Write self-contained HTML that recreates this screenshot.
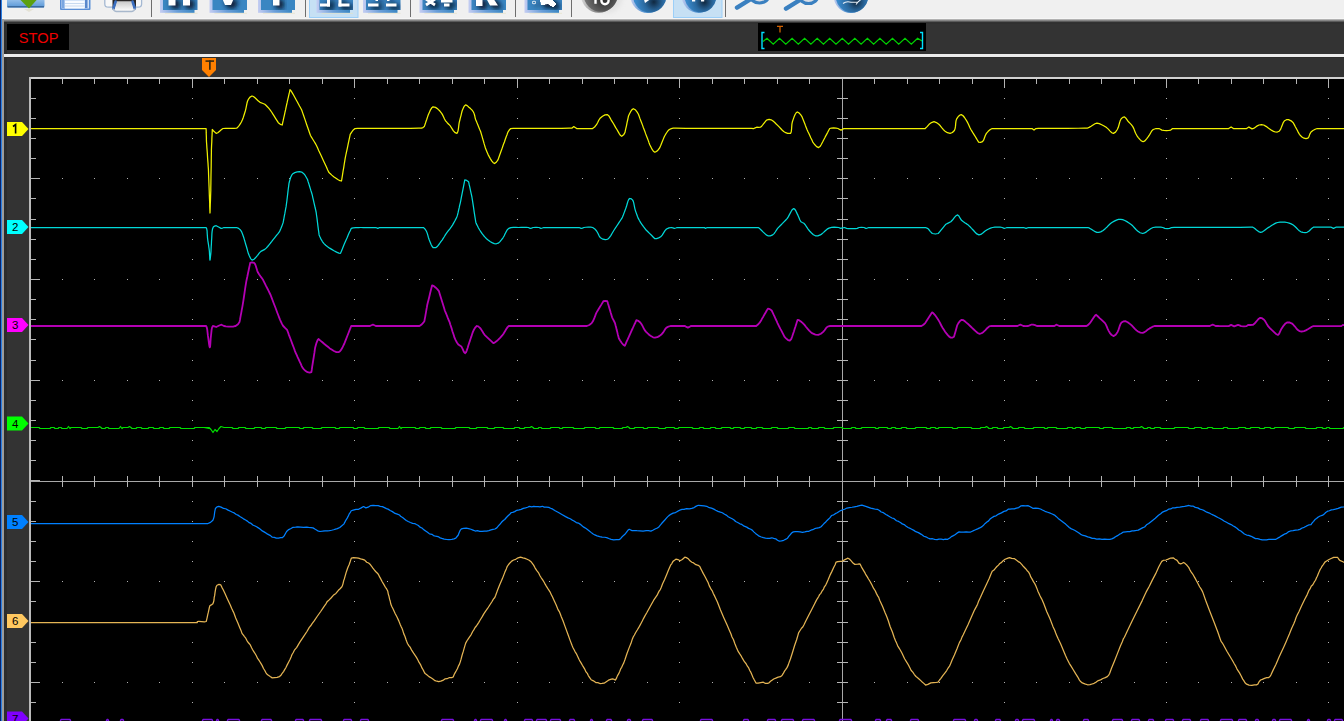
<!DOCTYPE html>
<html><head><meta charset="utf-8"><style>
html,body{margin:0;padding:0;width:1344px;height:721px;overflow:hidden;background:#333;}
svg{position:absolute;left:0;top:0;display:block;}
</style></head><body>
<svg width="1344" height="721" viewBox="0 0 1344 721" shape-rendering="crispEdges">
<defs>
<linearGradient id="tbsh" x1="0" y1="0" x2="0" y2="1">
<stop offset="0" stop-color="#c8c8c8"/><stop offset="0.5" stop-color="#7a7a7a"/><stop offset="1" stop-color="#323232"/>
</linearGradient>
</defs>
<rect x="0" y="0" width="1344" height="721" fill="#333"/>
<!-- toolbar -->
<rect x="0" y="0" width="1344" height="19" fill="#f0f0f0"/>
<rect x="0" y="18" width="1344" height="1" fill="#f6f6f6"/>
<rect x="0" y="19" width="1344" height="3.5" fill="url(#tbsh)"/>
<g shape-rendering="auto"><defs>
<linearGradient id="cside" x1="0" y1="0" x2="1" y2="0"><stop offset="0" stop-color="#c0ccf0"/><stop offset="0.35" stop-color="#5a96d4"/><stop offset="1" stop-color="#3a86c2"/></linearGradient>
<radialGradient id="cfront" cx="0.62" cy="0.68" r="0.55"><stop offset="0" stop-color="#102840"/><stop offset="0.5" stop-color="#2a689e"/><stop offset="1" stop-color="#3a8acc"/></radialGradient>
<linearGradient id="gside" x1="0" y1="0" x2="1" y2="0"><stop offset="0" stop-color="#d8d8d8"/><stop offset="0.4" stop-color="#8a8a8a"/><stop offset="1" stop-color="#6a6a6a"/></linearGradient>
<radialGradient id="gfront" cx="0.6" cy="0.62" r="0.6"><stop offset="0" stop-color="#2c2c2c"/><stop offset="0.55" stop-color="#555"/><stop offset="1" stop-color="#787878"/></radialGradient>
<linearGradient id="side" x1="0" y1="0" x2="1" y2="0"><stop offset="0" stop-color="#c4cdf2"/><stop offset="0.5" stop-color="#6a9ed8"/><stop offset="1" stop-color="#3a86c2"/></linearGradient>
<filter id="bl" x="-50%" y="-50%" width="200%" height="200%"><feGaussianBlur stdDeviation="2.4"/></filter>
<linearGradient id="edge" x1="0" y1="0" x2="1" y2="0"><stop offset="0" stop-color="#c8d4f4"/><stop offset="1" stop-color="#c8d4f4" stop-opacity="0"/></linearGradient>
<linearGradient id="g1" x1="0" y1="0" x2="0" y2="1"><stop offset="0" stop-color="#a8ccf0"/><stop offset="1" stop-color="#5896d6"/></linearGradient>
<radialGradient id="gb" cx="0.55" cy="0.25" r="0.7"><stop offset="0" stop-color="#0e2a48"/><stop offset="0.45" stop-color="#2a6aa4"/><stop offset="1" stop-color="#3a88c6"/></radialGradient>
<radialGradient id="gc" cx="0.55" cy="0.3" r="0.65"><stop offset="0" stop-color="#0c2036"/><stop offset="0.55" stop-color="#2b6ca6"/><stop offset="1" stop-color="#3a8ccc"/></radialGradient>
<radialGradient id="gg" cx="0.55" cy="0.3" r="0.65"><stop offset="0" stop-color="#2a2a2a"/><stop offset="0.6" stop-color="#5a5a5a"/><stop offset="1" stop-color="#7a7a7a"/></radialGradient>
</defs>
<!-- icon 1: blue box with green arrow -->
<rect x="7" y="-3" width="37.5" height="10.5" rx="1.5" fill="url(#g1)"/>
<rect x="7.5" y="6" width="36.5" height="1.5" fill="#3a6aa0"/>
<polygon points="19.5,-1 37.5,-1 29,8.5" fill="#5ca010"/>
<polygon points="24,9 34,9 29,12" fill="#e4e2d4"/>
<!-- floppy -->
<rect x="60" y="-2" width="30.5" height="12" rx="1" fill="#5b8fd6"/>
<rect x="61.5" y="-2" width="27.5" height="10.5" fill="#d4e4f8"/>
<rect x="65" y="1" width="19.5" height="7.5" fill="#f8fbff"/>
<rect x="65" y="3" width="19.5" height="1" fill="#c8daf0"/>
<rect x="65" y="5.5" width="19.5" height="1" fill="#c8daf0"/>
<rect x="62" y="-2" width="2.5" height="10" fill="#7aa6e0"/>
<rect x="85" y="-2" width="2.5" height="10" fill="#5a88cc"/>
<!-- printer -->
<g shape-rendering="geometricPrecision">
<linearGradient id="paper" x1="0" y1="0" x2="0" y2="1"><stop offset="0" stop-color="#c8c8c8"/><stop offset="1" stop-color="#fafafa"/></linearGradient>
<path d="M104.8,-2 L104.8,4 Q104.8,7.2 108.5,7.2 L138,7.2 Q141.6,7.2 141.6,4 L141.6,-2" fill="#f8f8f8" stroke="#a4b8d2" stroke-width="1.3"/>
<polygon points="112.5,-2 136,-2 136,6 135,9.5 113,9.5 112.5,6" fill="#2a2828"/>
<polygon points="116.5,1.2 131.8,1.2 134.5,10.3 114,10.3" fill="url(#paper)"/>
<line x1="115.6" y1="1.5" x2="113.4" y2="8.6" stroke="#3a6ec0" stroke-width="2.6" stroke-linecap="round"/>
<line x1="132.6" y1="1.5" x2="134.8" y2="8.6" stroke="#3a6ec0" stroke-width="2.6" stroke-linecap="round"/>
<path d="M112.8,8.5 Q114,11.5 116.5,11.5 L131.5,11.5 Q134,11.5 135.3,8.5" fill="none" stroke="#a8b8cc" stroke-width="1.3"/>
</g>
<!-- separators -->
<rect x="151" y="0" width="1" height="17" fill="#6e6e6e"/>
<rect x="305" y="0" width="1" height="17" fill="#6e6e6e"/>
<rect x="410" y="0" width="1" height="17" fill="#6e6e6e"/>
<rect x="515" y="0" width="1" height="17" fill="#6e6e6e"/>
<rect x="571" y="0" width="1" height="17" fill="#6e6e6e"/>
<rect x="725" y="0" width="1" height="17" fill="#6e6e6e"/>
<!-- selected backgrounds -->
<rect x="309.5" y="-1" width="48.5" height="18.5" fill="#c6e0f4" stroke="#9ccff8" stroke-width="1"/>
<rect x="673.5" y="-1" width="48.5" height="18.5" fill="#c6e0f4" stroke="#9ccff8" stroke-width="1"/>
<!-- blue square icons -->
<clipPath id="cp1"><rect x="163" y="-3" width="34.5" height="13"/></clipPath><rect x="165" y="12.8" width="32.5" height="1" fill="#e6e2c6" opacity="0.7"/><rect x="160" y="0" width="34.5" height="12.8" fill="url(#side)"/><rect x="163" y="-3" width="34.5" height="13" fill="#3a86c2"/><g clip-path="url(#cp1)"><g filter="url(#bl)" transform="translate(4,3)" fill="#0a1c34" stroke="#0a1c34"><rect x="168.5" y="-2" width="7" height="7.5" stroke="none"/><rect x="183" y="-2" width="7" height="7.5" stroke="none"/></g><g filter="url(#bl)" transform="translate(2,1.5)" fill="#0a1c34" stroke="#0a1c34" opacity="0.8"><rect x="168.5" y="-2" width="7" height="7.5" stroke="none"/><rect x="183" y="-2" width="7" height="7.5" stroke="none"/></g></g><g fill="#fff" stroke="#fff"><rect x="168.5" y="-2" width="7" height="7.5" stroke="none"/><rect x="183" y="-2" width="7" height="7.5" stroke="none"/></g>
<clipPath id="cp2"><rect x="212.5" y="-3" width="34.5" height="13"/></clipPath><rect x="214.5" y="12.8" width="32.5" height="1" fill="#e6e2c6" opacity="0.7"/><rect x="209.5" y="0" width="34.5" height="12.8" fill="url(#side)"/><rect x="212.5" y="-3" width="34.5" height="13" fill="#3a86c2"/><g clip-path="url(#cp2)"><g filter="url(#bl)" transform="translate(4,3)" fill="#0a1c34" stroke="#0a1c34"><polygon points="222,-2 234,-2 231,5 225,5" stroke="none"/></g><g filter="url(#bl)" transform="translate(2,1.5)" fill="#0a1c34" stroke="#0a1c34" opacity="0.8"><polygon points="222,-2 234,-2 231,5 225,5" stroke="none"/></g></g><g fill="#fff" stroke="#fff"><polygon points="222,-2 234,-2 231,5 225,5" stroke="none"/></g>
<clipPath id="cp3"><rect x="261" y="-3" width="34" height="13"/></clipPath><rect x="263" y="12.8" width="32" height="1" fill="#e6e2c6" opacity="0.7"/><rect x="258" y="0" width="34" height="12.8" fill="url(#side)"/><rect x="261" y="-3" width="34" height="13" fill="#3a86c2"/><g clip-path="url(#cp3)"><g filter="url(#bl)" transform="translate(4,3)" fill="#0a1c34" stroke="#0a1c34"><rect x="273" y="-2" width="6.5" height="7.5" stroke="none"/></g><g filter="url(#bl)" transform="translate(2,1.5)" fill="#0a1c34" stroke="#0a1c34" opacity="0.8"><rect x="273" y="-2" width="6.5" height="7.5" stroke="none"/></g></g><g fill="#fff" stroke="#fff"><rect x="273" y="-2" width="6.5" height="7.5" stroke="none"/></g>
<clipPath id="cp4"><rect x="319.5" y="-3" width="33.5" height="13"/></clipPath><rect x="321.5" y="12.8" width="31.5" height="1" fill="#e6e2c6" opacity="0.7"/><rect x="316.5" y="0" width="33.5" height="12.8" fill="url(#side)"/><rect x="319.5" y="-3" width="33.5" height="13" fill="#3a86c2"/><g clip-path="url(#cp4)"><g filter="url(#bl)" transform="translate(4,3)" fill="#0a1c34" stroke="#0a1c34"><rect x="320" y="3.5" width="10" height="3" stroke="none"/><rect x="327" y="-2" width="3" height="8.5" stroke="none"/><rect x="338.5" y="3.5" width="11" height="3" stroke="none"/><rect x="338.5" y="-2" width="3" height="8.5" stroke="none"/></g><g filter="url(#bl)" transform="translate(2,1.5)" fill="#0a1c34" stroke="#0a1c34" opacity="0.8"><rect x="320" y="3.5" width="10" height="3" stroke="none"/><rect x="327" y="-2" width="3" height="8.5" stroke="none"/><rect x="338.5" y="3.5" width="11" height="3" stroke="none"/><rect x="338.5" y="-2" width="3" height="8.5" stroke="none"/></g></g><g fill="#fff" stroke="#fff"><rect x="320" y="3.5" width="10" height="3" stroke="none"/><rect x="327" y="-2" width="3" height="8.5" stroke="none"/><rect x="338.5" y="3.5" width="11" height="3" stroke="none"/><rect x="338.5" y="-2" width="3" height="8.5" stroke="none"/></g>
<clipPath id="cp5"><rect x="366" y="-3" width="34.5" height="13"/></clipPath><rect x="368" y="12.8" width="32.5" height="1" fill="#e6e2c6" opacity="0.7"/><rect x="363" y="0" width="34.5" height="12.8" fill="url(#side)"/><rect x="366" y="-3" width="34.5" height="13" fill="#3a86c2"/><g clip-path="url(#cp5)"><g filter="url(#bl)" transform="translate(4,3)" fill="#0a1c34" stroke="#0a1c34"><rect x="368" y="3.5" width="10.5" height="3" stroke="none"/><rect x="386" y="3.5" width="10.5" height="3" stroke="none"/><rect x="375.5" y="-2" width="2.5" height="3" stroke="none"/><rect x="387" y="-2" width="2.5" height="3" stroke="none"/></g><g filter="url(#bl)" transform="translate(2,1.5)" fill="#0a1c34" stroke="#0a1c34" opacity="0.8"><rect x="368" y="3.5" width="10.5" height="3" stroke="none"/><rect x="386" y="3.5" width="10.5" height="3" stroke="none"/><rect x="375.5" y="-2" width="2.5" height="3" stroke="none"/><rect x="387" y="-2" width="2.5" height="3" stroke="none"/></g></g><g fill="#fff" stroke="#fff"><rect x="368" y="3.5" width="10.5" height="3" stroke="none"/><rect x="386" y="3.5" width="10.5" height="3" stroke="none"/><rect x="375.5" y="-2" width="2.5" height="3" stroke="none"/><rect x="387" y="-2" width="2.5" height="3" stroke="none"/></g>
<clipPath id="cp6"><rect x="422.5" y="-3" width="34.5" height="13"/></clipPath><rect x="424.5" y="12.8" width="32.5" height="1" fill="#e6e2c6" opacity="0.7"/><rect x="419.5" y="0" width="34.5" height="12.8" fill="url(#side)"/><rect x="422.5" y="-3" width="34.5" height="13" fill="#3a86c2"/><g clip-path="url(#cp6)"><g filter="url(#bl)" transform="translate(4,3)" fill="#0a1c34" stroke="#0a1c34"><path d="M426,-1 L435,5 M435,-1 L426,5" fill="none" stroke-width="2.8"/><rect x="441" y="0" width="11.5" height="2.5" stroke="none"/><rect x="444" y="3.5" width="5.5" height="3" stroke="none"/></g><g filter="url(#bl)" transform="translate(2,1.5)" fill="#0a1c34" stroke="#0a1c34" opacity="0.8"><path d="M426,-1 L435,5 M435,-1 L426,5" fill="none" stroke-width="2.8"/><rect x="441" y="0" width="11.5" height="2.5" stroke="none"/><rect x="444" y="3.5" width="5.5" height="3" stroke="none"/></g></g><g fill="#fff" stroke="#fff"><path d="M426,-1 L435,5 M435,-1 L426,5" fill="none" stroke-width="2.8"/><rect x="441" y="0" width="11.5" height="2.5" stroke="none"/><rect x="444" y="3.5" width="5.5" height="3" stroke="none"/></g>
<clipPath id="cp7"><rect x="471.5" y="-3" width="34.5" height="13"/></clipPath><rect x="473.5" y="12.8" width="32.5" height="1" fill="#e6e2c6" opacity="0.7"/><rect x="468.5" y="0" width="34.5" height="12.8" fill="url(#side)"/><rect x="471.5" y="-3" width="34.5" height="13" fill="#3a86c2"/><g clip-path="url(#cp7)"><g filter="url(#bl)" transform="translate(4,3)" fill="#0a1c34" stroke="#0a1c34"><rect x="476" y="-2" width="6.5" height="8" stroke="none"/><polygon points="486,-2 493,-2 498,5.5 490,5.5" stroke="none"/></g><g filter="url(#bl)" transform="translate(2,1.5)" fill="#0a1c34" stroke="#0a1c34" opacity="0.8"><rect x="476" y="-2" width="6.5" height="8" stroke="none"/><polygon points="486,-2 493,-2 498,5.5 490,5.5" stroke="none"/></g></g><g fill="#fff" stroke="#fff"><rect x="476" y="-2" width="6.5" height="8" stroke="none"/><polygon points="486,-2 493,-2 498,5.5 490,5.5" stroke="none"/></g>
<clipPath id="cp8"><rect x="527.5" y="-3" width="34.5" height="13"/></clipPath><rect x="529.5" y="12.8" width="32.5" height="1" fill="#e6e2c6" opacity="0.7"/><rect x="524.5" y="0" width="34.5" height="12.8" fill="url(#side)"/><rect x="527.5" y="-3" width="34.5" height="13" fill="#3a86c2"/><g clip-path="url(#cp8)"><g filter="url(#bl)" transform="translate(4,3)" fill="#0a1c34" stroke="#0a1c34"><polygon points="540,-2 550,-2 556,4 553,7 548,4 541,5" stroke="none"/><circle cx="534" cy="2.5" r="1.5" fill="none" stroke-width="0.8" opacity="0.6"/></g><g filter="url(#bl)" transform="translate(2,1.5)" fill="#0a1c34" stroke="#0a1c34" opacity="0.8"><polygon points="540,-2 550,-2 556,4 553,7 548,4 541,5" stroke="none"/><circle cx="534" cy="2.5" r="1.5" fill="none" stroke-width="0.8" opacity="0.6"/></g></g><g fill="#fff" stroke="#fff"><polygon points="540,-2 550,-2 556,4 553,7 548,4 541,5" stroke="none"/><circle cx="534" cy="2.5" r="1.5" fill="none" stroke-width="0.8" opacity="0.6"/></g>
/></g><g fill="#fff" stroke="#fff"><polygon points="540,-2 550,-2 556,4 553,7 548,4 541,5" stroke="none"/><circle cx="534" cy="2.5" r="1.5" fill="none" stroke-width="0.8" opacity="0.6"/></g>
<!-- circle buttons -->
<g shape-rendering="geometricPrecision">
<ellipse cx="606" cy="-2" rx="16" ry="15" fill="#c8c8c8" opacity="0.35" filter="url(#bl)"/>
<circle cx="598.8" cy="-5" r="17.8" fill="url(#gside)"/>
<circle cx="600.8" cy="-5.2" r="17" fill="url(#gfront)"/>
<path d="M595.5,-2 L595.5,3.8" stroke="#fff" stroke-width="2.4"/>
<ellipse cx="605" cy="0.8" rx="3.6" ry="3.4" fill="none" stroke="#fff" stroke-width="2.4"/>
<circle cx="647.8" cy="-4.2" r="17.3" fill="url(#cside)"/>
<circle cx="649.8" cy="-4" r="16.6" fill="url(#cfront)"/>
<polygon points="643.5,-2 652,-2 645,3" fill="#fff"/>
<circle cx="698.8" cy="-4.2" r="17.1" fill="url(#cside)"/>
<circle cx="700.5" cy="-3.6" r="15.9" fill="url(#cfront)"/>
<rect x="692" y="-2" width="3.2" height="3.5" fill="#fff"/><rect x="701" y="-2" width="3.2" height="3.5" fill="#fff"/>
<circle cx="850.9" cy="-4.2" r="17.2" fill="url(#cside)"/>
<circle cx="852" cy="-3.6" r="16.2" fill="url(#cfront)"/>
<path d="M843,3.5 Q846,1 851,2.2 L858,2 L862,-1.5 M856,4.5 L858,2" stroke="#e8f0f8" stroke-width="1.1" fill="none"/>
</g>
<!-- magnifiers --><g shape-rendering="geometricPrecision">
<ellipse cx="759.5" cy="-5" rx="9.5" ry="8" fill="#dadee6" stroke="#3a80c0" stroke-width="3.2"/>
<line x1="737" y1="7.6" x2="751" y2="-1" stroke="#3a80c0" stroke-width="4.4" stroke-linecap="round"/>
<ellipse cx="808.5" cy="-4.5" rx="9.5" ry="8" fill="#dadee6" stroke="#3a80c0" stroke-width="3.2"/>
<line x1="786" y1="8.6" x2="800" y2="0" stroke="#3a80c0" stroke-width="4.4" stroke-linecap="round"/>
</g>
</g>
<!-- status bar -->
<rect x="4" y="22.5" width="1344" height="1.5" fill="#303030"/>
<rect x="4" y="22" width="3" height="721" fill="#2c2c2c"/>
<rect x="7" y="24" width="62" height="26" fill="#000"/>
<text x="38.6" y="43.2" font-size="15.5" fill="#ee0000" text-anchor="middle" font-family="Liberation Sans, sans-serif" textLength="39.6" lengthAdjust="spacingAndGlyphs" shape-rendering="auto">STOP</text>
<rect x="758" y="23" width="168" height="28" fill="#000"/>
<g shape-rendering="auto"><polyline points="763.0,41.5 767.0,38.3 773.2,44.2 779.5,38.3 785.8,44.2 792.1,38.3 798.3,44.2 804.6,38.3 810.9,44.2 817.2,38.3 823.4,44.2 829.7,38.3 836.0,44.2 842.3,38.3 848.5,44.2 854.8,38.3 861.1,44.2 867.4,38.3 873.6,44.2 879.9,38.3 886.2,44.2 892.5,38.3 898.7,44.2 905.0,38.3 911.3,44.2 917.6,38.3 922.0,41.0" fill="none" stroke="#00d000" stroke-width="1.2"/>
<path d="M764.5,32.5 L762,32.5 L762,48.5 L764.5,48.5 M920,32.5 L922.5,32.5 L922.5,48.5 L920,48.5" fill="none" stroke="#00e0ff" stroke-width="1.4"/>
<path d="M777,26.3 L783,26.3 M780,26.3 L780,32.5" fill="none" stroke="#d06000" stroke-width="1.3"/></g>
<rect x="4" y="54" width="1344" height="3" fill="#ececec"/>
<rect x="4" y="57" width="1344" height="1" fill="#2c2c2c"/>
<!-- graticule -->
<rect x="31" y="79" width="1313" height="642" fill="#000"/><rect x="29" y="77" width="1315" height="2" fill="#d2d2d2"/><rect x="29" y="77" width="2" height="644" fill="#bababa"/><rect x="62" y="79" width="1" height="5" fill="#b4b4b4"/><rect x="94" y="79" width="1" height="5" fill="#b4b4b4"/><rect x="127" y="79" width="1" height="5" fill="#b4b4b4"/><rect x="159" y="79" width="1" height="5" fill="#b4b4b4"/><rect x="192" y="79" width="1" height="9" fill="#b4b4b4"/><rect x="224" y="79" width="1" height="5" fill="#b4b4b4"/><rect x="257" y="79" width="1" height="5" fill="#b4b4b4"/><rect x="289" y="79" width="1" height="5" fill="#b4b4b4"/><rect x="322" y="79" width="1" height="5" fill="#b4b4b4"/><rect x="354" y="79" width="1" height="9" fill="#b4b4b4"/><rect x="387" y="79" width="1" height="5" fill="#b4b4b4"/><rect x="419" y="79" width="1" height="5" fill="#b4b4b4"/><rect x="452" y="79" width="1" height="5" fill="#b4b4b4"/><rect x="484" y="79" width="1" height="5" fill="#b4b4b4"/><rect x="517" y="79" width="1" height="9" fill="#b4b4b4"/><rect x="549" y="79" width="1" height="5" fill="#b4b4b4"/><rect x="582" y="79" width="1" height="5" fill="#b4b4b4"/><rect x="614" y="79" width="1" height="5" fill="#b4b4b4"/><rect x="647" y="79" width="1" height="5" fill="#b4b4b4"/><rect x="679" y="79" width="1" height="9" fill="#b4b4b4"/><rect x="712" y="79" width="1" height="5" fill="#b4b4b4"/><rect x="744" y="79" width="1" height="5" fill="#b4b4b4"/><rect x="777" y="79" width="1" height="5" fill="#b4b4b4"/><rect x="809" y="79" width="1" height="5" fill="#b4b4b4"/><rect x="842" y="79" width="1" height="9" fill="#b4b4b4"/><rect x="874" y="79" width="1" height="5" fill="#b4b4b4"/><rect x="907" y="79" width="1" height="5" fill="#b4b4b4"/><rect x="939" y="79" width="1" height="5" fill="#b4b4b4"/><rect x="972" y="79" width="1" height="5" fill="#b4b4b4"/><rect x="1004" y="79" width="1" height="9" fill="#b4b4b4"/><rect x="1036" y="79" width="1" height="5" fill="#b4b4b4"/><rect x="1069" y="79" width="1" height="5" fill="#b4b4b4"/><rect x="1101" y="79" width="1" height="5" fill="#b4b4b4"/><rect x="1134" y="79" width="1" height="5" fill="#b4b4b4"/><rect x="1166" y="79" width="1" height="9" fill="#b4b4b4"/><rect x="1198" y="79" width="1" height="5" fill="#b4b4b4"/><rect x="1231" y="79" width="1" height="5" fill="#b4b4b4"/><rect x="1263" y="79" width="1" height="5" fill="#b4b4b4"/><rect x="1296" y="79" width="1" height="5" fill="#b4b4b4"/><rect x="1328" y="79" width="1" height="9" fill="#b4b4b4"/><rect x="31" y="98" width="5" height="1" fill="#b4b4b4"/><rect x="31" y="118" width="5" height="1" fill="#b4b4b4"/><rect x="31" y="138" width="5" height="1" fill="#b4b4b4"/><rect x="31" y="158" width="5" height="1" fill="#b4b4b4"/><rect x="31" y="178" width="9" height="1" fill="#b4b4b4"/><rect x="31" y="198" width="5" height="1" fill="#b4b4b4"/><rect x="31" y="219" width="5" height="1" fill="#b4b4b4"/><rect x="31" y="239" width="5" height="1" fill="#b4b4b4"/><rect x="31" y="259" width="5" height="1" fill="#b4b4b4"/><rect x="31" y="279" width="9" height="1" fill="#b4b4b4"/><rect x="31" y="299" width="5" height="1" fill="#b4b4b4"/><rect x="31" y="319" width="5" height="1" fill="#b4b4b4"/><rect x="31" y="339" width="5" height="1" fill="#b4b4b4"/><rect x="31" y="360" width="5" height="1" fill="#b4b4b4"/><rect x="31" y="380" width="9" height="1" fill="#b4b4b4"/><rect x="31" y="400" width="5" height="1" fill="#b4b4b4"/><rect x="31" y="420" width="5" height="1" fill="#b4b4b4"/><rect x="31" y="440" width="5" height="1" fill="#b4b4b4"/><rect x="31" y="460" width="5" height="1" fill="#b4b4b4"/><rect x="31" y="480" width="9" height="1" fill="#b4b4b4"/><rect x="31" y="501" width="5" height="1" fill="#b4b4b4"/><rect x="31" y="521" width="5" height="1" fill="#b4b4b4"/><rect x="31" y="541" width="5" height="1" fill="#b4b4b4"/><rect x="31" y="561" width="5" height="1" fill="#b4b4b4"/><rect x="31" y="581" width="9" height="1" fill="#b4b4b4"/><rect x="31" y="601" width="5" height="1" fill="#b4b4b4"/><rect x="31" y="622" width="5" height="1" fill="#b4b4b4"/><rect x="31" y="642" width="5" height="1" fill="#b4b4b4"/><rect x="31" y="662" width="5" height="1" fill="#b4b4b4"/><rect x="31" y="682" width="9" height="1" fill="#b4b4b4"/><rect x="31" y="702" width="5" height="1" fill="#b4b4b4"/><rect x="842" y="79" width="1" height="642" fill="#a8a8a8"/><rect x="31" y="481" width="1313" height="1" fill="#a8a8a8"/><rect x="62" y="476" width="1" height="11" fill="#b4b4b4"/><rect x="94" y="476" width="1" height="11" fill="#b4b4b4"/><rect x="127" y="476" width="1" height="11" fill="#b4b4b4"/><rect x="159" y="476" width="1" height="11" fill="#b4b4b4"/><rect x="192" y="476" width="1" height="11" fill="#b4b4b4"/><rect x="224" y="476" width="1" height="11" fill="#b4b4b4"/><rect x="257" y="476" width="1" height="11" fill="#b4b4b4"/><rect x="289" y="476" width="1" height="11" fill="#b4b4b4"/><rect x="322" y="476" width="1" height="11" fill="#b4b4b4"/><rect x="354" y="476" width="1" height="11" fill="#b4b4b4"/><rect x="387" y="476" width="1" height="11" fill="#b4b4b4"/><rect x="419" y="476" width="1" height="11" fill="#b4b4b4"/><rect x="452" y="476" width="1" height="11" fill="#b4b4b4"/><rect x="484" y="476" width="1" height="11" fill="#b4b4b4"/><rect x="517" y="476" width="1" height="11" fill="#b4b4b4"/><rect x="549" y="476" width="1" height="11" fill="#b4b4b4"/><rect x="582" y="476" width="1" height="11" fill="#b4b4b4"/><rect x="614" y="476" width="1" height="11" fill="#b4b4b4"/><rect x="647" y="476" width="1" height="11" fill="#b4b4b4"/><rect x="679" y="476" width="1" height="11" fill="#b4b4b4"/><rect x="712" y="476" width="1" height="11" fill="#b4b4b4"/><rect x="744" y="476" width="1" height="11" fill="#b4b4b4"/><rect x="777" y="476" width="1" height="11" fill="#b4b4b4"/><rect x="809" y="476" width="1" height="11" fill="#b4b4b4"/><rect x="874" y="476" width="1" height="11" fill="#b4b4b4"/><rect x="907" y="476" width="1" height="11" fill="#b4b4b4"/><rect x="939" y="476" width="1" height="11" fill="#b4b4b4"/><rect x="972" y="476" width="1" height="11" fill="#b4b4b4"/><rect x="1004" y="476" width="1" height="11" fill="#b4b4b4"/><rect x="1036" y="476" width="1" height="11" fill="#b4b4b4"/><rect x="1069" y="476" width="1" height="11" fill="#b4b4b4"/><rect x="1101" y="476" width="1" height="11" fill="#b4b4b4"/><rect x="1134" y="476" width="1" height="11" fill="#b4b4b4"/><rect x="1166" y="476" width="1" height="11" fill="#b4b4b4"/><rect x="1198" y="476" width="1" height="11" fill="#b4b4b4"/><rect x="1231" y="476" width="1" height="11" fill="#b4b4b4"/><rect x="1263" y="476" width="1" height="11" fill="#b4b4b4"/><rect x="1296" y="476" width="1" height="11" fill="#b4b4b4"/><rect x="1328" y="476" width="1" height="11" fill="#b4b4b4"/><rect x="837" y="98" width="11" height="1" fill="#b4b4b4"/><rect x="837" y="118" width="11" height="1" fill="#b4b4b4"/><rect x="837" y="138" width="11" height="1" fill="#b4b4b4"/><rect x="837" y="158" width="11" height="1" fill="#b4b4b4"/><rect x="837" y="178" width="11" height="1" fill="#b4b4b4"/><rect x="837" y="198" width="11" height="1" fill="#b4b4b4"/><rect x="837" y="219" width="11" height="1" fill="#b4b4b4"/><rect x="837" y="239" width="11" height="1" fill="#b4b4b4"/><rect x="837" y="259" width="11" height="1" fill="#b4b4b4"/><rect x="837" y="279" width="11" height="1" fill="#b4b4b4"/><rect x="837" y="299" width="11" height="1" fill="#b4b4b4"/><rect x="837" y="319" width="11" height="1" fill="#b4b4b4"/><rect x="837" y="339" width="11" height="1" fill="#b4b4b4"/><rect x="837" y="360" width="11" height="1" fill="#b4b4b4"/><rect x="837" y="380" width="11" height="1" fill="#b4b4b4"/><rect x="837" y="400" width="11" height="1" fill="#b4b4b4"/><rect x="837" y="420" width="11" height="1" fill="#b4b4b4"/><rect x="837" y="440" width="11" height="1" fill="#b4b4b4"/><rect x="837" y="460" width="11" height="1" fill="#b4b4b4"/><rect x="837" y="501" width="11" height="1" fill="#b4b4b4"/><rect x="837" y="521" width="11" height="1" fill="#b4b4b4"/><rect x="837" y="541" width="11" height="1" fill="#b4b4b4"/><rect x="837" y="561" width="11" height="1" fill="#b4b4b4"/><rect x="837" y="581" width="11" height="1" fill="#b4b4b4"/><rect x="837" y="601" width="11" height="1" fill="#b4b4b4"/><rect x="837" y="622" width="11" height="1" fill="#b4b4b4"/><rect x="837" y="642" width="11" height="1" fill="#b4b4b4"/><rect x="837" y="662" width="11" height="1" fill="#b4b4b4"/><rect x="837" y="682" width="11" height="1" fill="#b4b4b4"/><rect x="837" y="702" width="11" height="1" fill="#b4b4b4"/><rect x="192" y="98" width="1" height="1" fill="#b0b0b0"/><rect x="192" y="118" width="1" height="1" fill="#b0b0b0"/><rect x="192" y="138" width="1" height="1" fill="#b0b0b0"/><rect x="192" y="158" width="1" height="1" fill="#b0b0b0"/><rect x="192" y="198" width="1" height="1" fill="#b0b0b0"/><rect x="192" y="219" width="1" height="1" fill="#b0b0b0"/><rect x="192" y="239" width="1" height="1" fill="#b0b0b0"/><rect x="192" y="259" width="1" height="1" fill="#b0b0b0"/><rect x="192" y="299" width="1" height="1" fill="#b0b0b0"/><rect x="192" y="319" width="1" height="1" fill="#b0b0b0"/><rect x="192" y="339" width="1" height="1" fill="#b0b0b0"/><rect x="192" y="360" width="1" height="1" fill="#b0b0b0"/><rect x="192" y="400" width="1" height="1" fill="#b0b0b0"/><rect x="192" y="420" width="1" height="1" fill="#b0b0b0"/><rect x="192" y="440" width="1" height="1" fill="#b0b0b0"/><rect x="192" y="460" width="1" height="1" fill="#b0b0b0"/><rect x="192" y="501" width="1" height="1" fill="#b0b0b0"/><rect x="192" y="521" width="1" height="1" fill="#b0b0b0"/><rect x="192" y="541" width="1" height="1" fill="#b0b0b0"/><rect x="192" y="561" width="1" height="1" fill="#b0b0b0"/><rect x="192" y="601" width="1" height="1" fill="#b0b0b0"/><rect x="192" y="622" width="1" height="1" fill="#b0b0b0"/><rect x="192" y="642" width="1" height="1" fill="#b0b0b0"/><rect x="192" y="662" width="1" height="1" fill="#b0b0b0"/><rect x="192" y="702" width="1" height="1" fill="#b0b0b0"/><rect x="354" y="98" width="1" height="1" fill="#b0b0b0"/><rect x="354" y="118" width="1" height="1" fill="#b0b0b0"/><rect x="354" y="138" width="1" height="1" fill="#b0b0b0"/><rect x="354" y="158" width="1" height="1" fill="#b0b0b0"/><rect x="354" y="198" width="1" height="1" fill="#b0b0b0"/><rect x="354" y="219" width="1" height="1" fill="#b0b0b0"/><rect x="354" y="239" width="1" height="1" fill="#b0b0b0"/><rect x="354" y="259" width="1" height="1" fill="#b0b0b0"/><rect x="354" y="299" width="1" height="1" fill="#b0b0b0"/><rect x="354" y="319" width="1" height="1" fill="#b0b0b0"/><rect x="354" y="339" width="1" height="1" fill="#b0b0b0"/><rect x="354" y="360" width="1" height="1" fill="#b0b0b0"/><rect x="354" y="400" width="1" height="1" fill="#b0b0b0"/><rect x="354" y="420" width="1" height="1" fill="#b0b0b0"/><rect x="354" y="440" width="1" height="1" fill="#b0b0b0"/><rect x="354" y="460" width="1" height="1" fill="#b0b0b0"/><rect x="354" y="501" width="1" height="1" fill="#b0b0b0"/><rect x="354" y="521" width="1" height="1" fill="#b0b0b0"/><rect x="354" y="541" width="1" height="1" fill="#b0b0b0"/><rect x="354" y="561" width="1" height="1" fill="#b0b0b0"/><rect x="354" y="601" width="1" height="1" fill="#b0b0b0"/><rect x="354" y="622" width="1" height="1" fill="#b0b0b0"/><rect x="354" y="642" width="1" height="1" fill="#b0b0b0"/><rect x="354" y="662" width="1" height="1" fill="#b0b0b0"/><rect x="354" y="702" width="1" height="1" fill="#b0b0b0"/><rect x="517" y="98" width="1" height="1" fill="#b0b0b0"/><rect x="517" y="118" width="1" height="1" fill="#b0b0b0"/><rect x="517" y="138" width="1" height="1" fill="#b0b0b0"/><rect x="517" y="158" width="1" height="1" fill="#b0b0b0"/><rect x="517" y="198" width="1" height="1" fill="#b0b0b0"/><rect x="517" y="219" width="1" height="1" fill="#b0b0b0"/><rect x="517" y="239" width="1" height="1" fill="#b0b0b0"/><rect x="517" y="259" width="1" height="1" fill="#b0b0b0"/><rect x="517" y="299" width="1" height="1" fill="#b0b0b0"/><rect x="517" y="319" width="1" height="1" fill="#b0b0b0"/><rect x="517" y="339" width="1" height="1" fill="#b0b0b0"/><rect x="517" y="360" width="1" height="1" fill="#b0b0b0"/><rect x="517" y="400" width="1" height="1" fill="#b0b0b0"/><rect x="517" y="420" width="1" height="1" fill="#b0b0b0"/><rect x="517" y="440" width="1" height="1" fill="#b0b0b0"/><rect x="517" y="460" width="1" height="1" fill="#b0b0b0"/><rect x="517" y="501" width="1" height="1" fill="#b0b0b0"/><rect x="517" y="521" width="1" height="1" fill="#b0b0b0"/><rect x="517" y="541" width="1" height="1" fill="#b0b0b0"/><rect x="517" y="561" width="1" height="1" fill="#b0b0b0"/><rect x="517" y="601" width="1" height="1" fill="#b0b0b0"/><rect x="517" y="622" width="1" height="1" fill="#b0b0b0"/><rect x="517" y="642" width="1" height="1" fill="#b0b0b0"/><rect x="517" y="662" width="1" height="1" fill="#b0b0b0"/><rect x="517" y="702" width="1" height="1" fill="#b0b0b0"/><rect x="679" y="98" width="1" height="1" fill="#b0b0b0"/><rect x="679" y="118" width="1" height="1" fill="#b0b0b0"/><rect x="679" y="138" width="1" height="1" fill="#b0b0b0"/><rect x="679" y="158" width="1" height="1" fill="#b0b0b0"/><rect x="679" y="198" width="1" height="1" fill="#b0b0b0"/><rect x="679" y="219" width="1" height="1" fill="#b0b0b0"/><rect x="679" y="239" width="1" height="1" fill="#b0b0b0"/><rect x="679" y="259" width="1" height="1" fill="#b0b0b0"/><rect x="679" y="299" width="1" height="1" fill="#b0b0b0"/><rect x="679" y="319" width="1" height="1" fill="#b0b0b0"/><rect x="679" y="339" width="1" height="1" fill="#b0b0b0"/><rect x="679" y="360" width="1" height="1" fill="#b0b0b0"/><rect x="679" y="400" width="1" height="1" fill="#b0b0b0"/><rect x="679" y="420" width="1" height="1" fill="#b0b0b0"/><rect x="679" y="440" width="1" height="1" fill="#b0b0b0"/><rect x="679" y="460" width="1" height="1" fill="#b0b0b0"/><rect x="679" y="501" width="1" height="1" fill="#b0b0b0"/><rect x="679" y="521" width="1" height="1" fill="#b0b0b0"/><rect x="679" y="541" width="1" height="1" fill="#b0b0b0"/><rect x="679" y="561" width="1" height="1" fill="#b0b0b0"/><rect x="679" y="601" width="1" height="1" fill="#b0b0b0"/><rect x="679" y="622" width="1" height="1" fill="#b0b0b0"/><rect x="679" y="642" width="1" height="1" fill="#b0b0b0"/><rect x="679" y="662" width="1" height="1" fill="#b0b0b0"/><rect x="679" y="702" width="1" height="1" fill="#b0b0b0"/><rect x="1004" y="98" width="1" height="1" fill="#b0b0b0"/><rect x="1004" y="118" width="1" height="1" fill="#b0b0b0"/><rect x="1004" y="138" width="1" height="1" fill="#b0b0b0"/><rect x="1004" y="158" width="1" height="1" fill="#b0b0b0"/><rect x="1004" y="198" width="1" height="1" fill="#b0b0b0"/><rect x="1004" y="219" width="1" height="1" fill="#b0b0b0"/><rect x="1004" y="239" width="1" height="1" fill="#b0b0b0"/><rect x="1004" y="259" width="1" height="1" fill="#b0b0b0"/><rect x="1004" y="299" width="1" height="1" fill="#b0b0b0"/><rect x="1004" y="319" width="1" height="1" fill="#b0b0b0"/><rect x="1004" y="339" width="1" height="1" fill="#b0b0b0"/><rect x="1004" y="360" width="1" height="1" fill="#b0b0b0"/><rect x="1004" y="400" width="1" height="1" fill="#b0b0b0"/><rect x="1004" y="420" width="1" height="1" fill="#b0b0b0"/><rect x="1004" y="440" width="1" height="1" fill="#b0b0b0"/><rect x="1004" y="460" width="1" height="1" fill="#b0b0b0"/><rect x="1004" y="501" width="1" height="1" fill="#b0b0b0"/><rect x="1004" y="521" width="1" height="1" fill="#b0b0b0"/><rect x="1004" y="541" width="1" height="1" fill="#b0b0b0"/><rect x="1004" y="561" width="1" height="1" fill="#b0b0b0"/><rect x="1004" y="601" width="1" height="1" fill="#b0b0b0"/><rect x="1004" y="622" width="1" height="1" fill="#b0b0b0"/><rect x="1004" y="642" width="1" height="1" fill="#b0b0b0"/><rect x="1004" y="662" width="1" height="1" fill="#b0b0b0"/><rect x="1004" y="702" width="1" height="1" fill="#b0b0b0"/><rect x="1166" y="98" width="1" height="1" fill="#b0b0b0"/><rect x="1166" y="118" width="1" height="1" fill="#b0b0b0"/><rect x="1166" y="138" width="1" height="1" fill="#b0b0b0"/><rect x="1166" y="158" width="1" height="1" fill="#b0b0b0"/><rect x="1166" y="198" width="1" height="1" fill="#b0b0b0"/><rect x="1166" y="219" width="1" height="1" fill="#b0b0b0"/><rect x="1166" y="239" width="1" height="1" fill="#b0b0b0"/><rect x="1166" y="259" width="1" height="1" fill="#b0b0b0"/><rect x="1166" y="299" width="1" height="1" fill="#b0b0b0"/><rect x="1166" y="319" width="1" height="1" fill="#b0b0b0"/><rect x="1166" y="339" width="1" height="1" fill="#b0b0b0"/><rect x="1166" y="360" width="1" height="1" fill="#b0b0b0"/><rect x="1166" y="400" width="1" height="1" fill="#b0b0b0"/><rect x="1166" y="420" width="1" height="1" fill="#b0b0b0"/><rect x="1166" y="440" width="1" height="1" fill="#b0b0b0"/><rect x="1166" y="460" width="1" height="1" fill="#b0b0b0"/><rect x="1166" y="501" width="1" height="1" fill="#b0b0b0"/><rect x="1166" y="521" width="1" height="1" fill="#b0b0b0"/><rect x="1166" y="541" width="1" height="1" fill="#b0b0b0"/><rect x="1166" y="561" width="1" height="1" fill="#b0b0b0"/><rect x="1166" y="601" width="1" height="1" fill="#b0b0b0"/><rect x="1166" y="622" width="1" height="1" fill="#b0b0b0"/><rect x="1166" y="642" width="1" height="1" fill="#b0b0b0"/><rect x="1166" y="662" width="1" height="1" fill="#b0b0b0"/><rect x="1166" y="702" width="1" height="1" fill="#b0b0b0"/><rect x="1328" y="98" width="1" height="1" fill="#b0b0b0"/><rect x="1328" y="118" width="1" height="1" fill="#b0b0b0"/><rect x="1328" y="138" width="1" height="1" fill="#b0b0b0"/><rect x="1328" y="158" width="1" height="1" fill="#b0b0b0"/><rect x="1328" y="198" width="1" height="1" fill="#b0b0b0"/><rect x="1328" y="219" width="1" height="1" fill="#b0b0b0"/><rect x="1328" y="239" width="1" height="1" fill="#b0b0b0"/><rect x="1328" y="259" width="1" height="1" fill="#b0b0b0"/><rect x="1328" y="299" width="1" height="1" fill="#b0b0b0"/><rect x="1328" y="319" width="1" height="1" fill="#b0b0b0"/><rect x="1328" y="339" width="1" height="1" fill="#b0b0b0"/><rect x="1328" y="360" width="1" height="1" fill="#b0b0b0"/><rect x="1328" y="400" width="1" height="1" fill="#b0b0b0"/><rect x="1328" y="420" width="1" height="1" fill="#b0b0b0"/><rect x="1328" y="440" width="1" height="1" fill="#b0b0b0"/><rect x="1328" y="460" width="1" height="1" fill="#b0b0b0"/><rect x="1328" y="501" width="1" height="1" fill="#b0b0b0"/><rect x="1328" y="521" width="1" height="1" fill="#b0b0b0"/><rect x="1328" y="541" width="1" height="1" fill="#b0b0b0"/><rect x="1328" y="561" width="1" height="1" fill="#b0b0b0"/><rect x="1328" y="601" width="1" height="1" fill="#b0b0b0"/><rect x="1328" y="622" width="1" height="1" fill="#b0b0b0"/><rect x="1328" y="642" width="1" height="1" fill="#b0b0b0"/><rect x="1328" y="662" width="1" height="1" fill="#b0b0b0"/><rect x="1328" y="702" width="1" height="1" fill="#b0b0b0"/><rect x="62" y="178" width="1" height="1" fill="#b0b0b0"/><rect x="94" y="178" width="1" height="1" fill="#b0b0b0"/><rect x="127" y="178" width="1" height="1" fill="#b0b0b0"/><rect x="159" y="178" width="1" height="1" fill="#b0b0b0"/><rect x="192" y="178" width="1" height="1" fill="#b0b0b0"/><rect x="224" y="178" width="1" height="1" fill="#b0b0b0"/><rect x="257" y="178" width="1" height="1" fill="#b0b0b0"/><rect x="289" y="178" width="1" height="1" fill="#b0b0b0"/><rect x="322" y="178" width="1" height="1" fill="#b0b0b0"/><rect x="354" y="178" width="1" height="1" fill="#b0b0b0"/><rect x="387" y="178" width="1" height="1" fill="#b0b0b0"/><rect x="419" y="178" width="1" height="1" fill="#b0b0b0"/><rect x="452" y="178" width="1" height="1" fill="#b0b0b0"/><rect x="484" y="178" width="1" height="1" fill="#b0b0b0"/><rect x="517" y="178" width="1" height="1" fill="#b0b0b0"/><rect x="549" y="178" width="1" height="1" fill="#b0b0b0"/><rect x="582" y="178" width="1" height="1" fill="#b0b0b0"/><rect x="614" y="178" width="1" height="1" fill="#b0b0b0"/><rect x="647" y="178" width="1" height="1" fill="#b0b0b0"/><rect x="679" y="178" width="1" height="1" fill="#b0b0b0"/><rect x="712" y="178" width="1" height="1" fill="#b0b0b0"/><rect x="744" y="178" width="1" height="1" fill="#b0b0b0"/><rect x="777" y="178" width="1" height="1" fill="#b0b0b0"/><rect x="809" y="178" width="1" height="1" fill="#b0b0b0"/><rect x="842" y="178" width="1" height="1" fill="#b0b0b0"/><rect x="874" y="178" width="1" height="1" fill="#b0b0b0"/><rect x="907" y="178" width="1" height="1" fill="#b0b0b0"/><rect x="939" y="178" width="1" height="1" fill="#b0b0b0"/><rect x="972" y="178" width="1" height="1" fill="#b0b0b0"/><rect x="1004" y="178" width="1" height="1" fill="#b0b0b0"/><rect x="1036" y="178" width="1" height="1" fill="#b0b0b0"/><rect x="1069" y="178" width="1" height="1" fill="#b0b0b0"/><rect x="1101" y="178" width="1" height="1" fill="#b0b0b0"/><rect x="1134" y="178" width="1" height="1" fill="#b0b0b0"/><rect x="1166" y="178" width="1" height="1" fill="#b0b0b0"/><rect x="1198" y="178" width="1" height="1" fill="#b0b0b0"/><rect x="1231" y="178" width="1" height="1" fill="#b0b0b0"/><rect x="1263" y="178" width="1" height="1" fill="#b0b0b0"/><rect x="1296" y="178" width="1" height="1" fill="#b0b0b0"/><rect x="1328" y="178" width="1" height="1" fill="#b0b0b0"/><rect x="62" y="279" width="1" height="1" fill="#b0b0b0"/><rect x="94" y="279" width="1" height="1" fill="#b0b0b0"/><rect x="127" y="279" width="1" height="1" fill="#b0b0b0"/><rect x="159" y="279" width="1" height="1" fill="#b0b0b0"/><rect x="192" y="279" width="1" height="1" fill="#b0b0b0"/><rect x="224" y="279" width="1" height="1" fill="#b0b0b0"/><rect x="257" y="279" width="1" height="1" fill="#b0b0b0"/><rect x="289" y="279" width="1" height="1" fill="#b0b0b0"/><rect x="322" y="279" width="1" height="1" fill="#b0b0b0"/><rect x="354" y="279" width="1" height="1" fill="#b0b0b0"/><rect x="387" y="279" width="1" height="1" fill="#b0b0b0"/><rect x="419" y="279" width="1" height="1" fill="#b0b0b0"/><rect x="452" y="279" width="1" height="1" fill="#b0b0b0"/><rect x="484" y="279" width="1" height="1" fill="#b0b0b0"/><rect x="517" y="279" width="1" height="1" fill="#b0b0b0"/><rect x="549" y="279" width="1" height="1" fill="#b0b0b0"/><rect x="582" y="279" width="1" height="1" fill="#b0b0b0"/><rect x="614" y="279" width="1" height="1" fill="#b0b0b0"/><rect x="647" y="279" width="1" height="1" fill="#b0b0b0"/><rect x="679" y="279" width="1" height="1" fill="#b0b0b0"/><rect x="712" y="279" width="1" height="1" fill="#b0b0b0"/><rect x="744" y="279" width="1" height="1" fill="#b0b0b0"/><rect x="777" y="279" width="1" height="1" fill="#b0b0b0"/><rect x="809" y="279" width="1" height="1" fill="#b0b0b0"/><rect x="842" y="279" width="1" height="1" fill="#b0b0b0"/><rect x="874" y="279" width="1" height="1" fill="#b0b0b0"/><rect x="907" y="279" width="1" height="1" fill="#b0b0b0"/><rect x="939" y="279" width="1" height="1" fill="#b0b0b0"/><rect x="972" y="279" width="1" height="1" fill="#b0b0b0"/><rect x="1004" y="279" width="1" height="1" fill="#b0b0b0"/><rect x="1036" y="279" width="1" height="1" fill="#b0b0b0"/><rect x="1069" y="279" width="1" height="1" fill="#b0b0b0"/><rect x="1101" y="279" width="1" height="1" fill="#b0b0b0"/><rect x="1134" y="279" width="1" height="1" fill="#b0b0b0"/><rect x="1166" y="279" width="1" height="1" fill="#b0b0b0"/><rect x="1198" y="279" width="1" height="1" fill="#b0b0b0"/><rect x="1231" y="279" width="1" height="1" fill="#b0b0b0"/><rect x="1263" y="279" width="1" height="1" fill="#b0b0b0"/><rect x="1296" y="279" width="1" height="1" fill="#b0b0b0"/><rect x="1328" y="279" width="1" height="1" fill="#b0b0b0"/><rect x="62" y="380" width="1" height="1" fill="#b0b0b0"/><rect x="94" y="380" width="1" height="1" fill="#b0b0b0"/><rect x="127" y="380" width="1" height="1" fill="#b0b0b0"/><rect x="159" y="380" width="1" height="1" fill="#b0b0b0"/><rect x="192" y="380" width="1" height="1" fill="#b0b0b0"/><rect x="224" y="380" width="1" height="1" fill="#b0b0b0"/><rect x="257" y="380" width="1" height="1" fill="#b0b0b0"/><rect x="289" y="380" width="1" height="1" fill="#b0b0b0"/><rect x="322" y="380" width="1" height="1" fill="#b0b0b0"/><rect x="354" y="380" width="1" height="1" fill="#b0b0b0"/><rect x="387" y="380" width="1" height="1" fill="#b0b0b0"/><rect x="419" y="380" width="1" height="1" fill="#b0b0b0"/><rect x="452" y="380" width="1" height="1" fill="#b0b0b0"/><rect x="484" y="380" width="1" height="1" fill="#b0b0b0"/><rect x="517" y="380" width="1" height="1" fill="#b0b0b0"/><rect x="549" y="380" width="1" height="1" fill="#b0b0b0"/><rect x="582" y="380" width="1" height="1" fill="#b0b0b0"/><rect x="614" y="380" width="1" height="1" fill="#b0b0b0"/><rect x="647" y="380" width="1" height="1" fill="#b0b0b0"/><rect x="679" y="380" width="1" height="1" fill="#b0b0b0"/><rect x="712" y="380" width="1" height="1" fill="#b0b0b0"/><rect x="744" y="380" width="1" height="1" fill="#b0b0b0"/><rect x="777" y="380" width="1" height="1" fill="#b0b0b0"/><rect x="809" y="380" width="1" height="1" fill="#b0b0b0"/><rect x="842" y="380" width="1" height="1" fill="#b0b0b0"/><rect x="874" y="380" width="1" height="1" fill="#b0b0b0"/><rect x="907" y="380" width="1" height="1" fill="#b0b0b0"/><rect x="939" y="380" width="1" height="1" fill="#b0b0b0"/><rect x="972" y="380" width="1" height="1" fill="#b0b0b0"/><rect x="1004" y="380" width="1" height="1" fill="#b0b0b0"/><rect x="1036" y="380" width="1" height="1" fill="#b0b0b0"/><rect x="1069" y="380" width="1" height="1" fill="#b0b0b0"/><rect x="1101" y="380" width="1" height="1" fill="#b0b0b0"/><rect x="1134" y="380" width="1" height="1" fill="#b0b0b0"/><rect x="1166" y="380" width="1" height="1" fill="#b0b0b0"/><rect x="1198" y="380" width="1" height="1" fill="#b0b0b0"/><rect x="1231" y="380" width="1" height="1" fill="#b0b0b0"/><rect x="1263" y="380" width="1" height="1" fill="#b0b0b0"/><rect x="1296" y="380" width="1" height="1" fill="#b0b0b0"/><rect x="1328" y="380" width="1" height="1" fill="#b0b0b0"/><rect x="62" y="581" width="1" height="1" fill="#b0b0b0"/><rect x="94" y="581" width="1" height="1" fill="#b0b0b0"/><rect x="127" y="581" width="1" height="1" fill="#b0b0b0"/><rect x="159" y="581" width="1" height="1" fill="#b0b0b0"/><rect x="192" y="581" width="1" height="1" fill="#b0b0b0"/><rect x="224" y="581" width="1" height="1" fill="#b0b0b0"/><rect x="257" y="581" width="1" height="1" fill="#b0b0b0"/><rect x="289" y="581" width="1" height="1" fill="#b0b0b0"/><rect x="322" y="581" width="1" height="1" fill="#b0b0b0"/><rect x="354" y="581" width="1" height="1" fill="#b0b0b0"/><rect x="387" y="581" width="1" height="1" fill="#b0b0b0"/><rect x="419" y="581" width="1" height="1" fill="#b0b0b0"/><rect x="452" y="581" width="1" height="1" fill="#b0b0b0"/><rect x="484" y="581" width="1" height="1" fill="#b0b0b0"/><rect x="517" y="581" width="1" height="1" fill="#b0b0b0"/><rect x="549" y="581" width="1" height="1" fill="#b0b0b0"/><rect x="582" y="581" width="1" height="1" fill="#b0b0b0"/><rect x="614" y="581" width="1" height="1" fill="#b0b0b0"/><rect x="647" y="581" width="1" height="1" fill="#b0b0b0"/><rect x="679" y="581" width="1" height="1" fill="#b0b0b0"/><rect x="712" y="581" width="1" height="1" fill="#b0b0b0"/><rect x="744" y="581" width="1" height="1" fill="#b0b0b0"/><rect x="777" y="581" width="1" height="1" fill="#b0b0b0"/><rect x="809" y="581" width="1" height="1" fill="#b0b0b0"/><rect x="842" y="581" width="1" height="1" fill="#b0b0b0"/><rect x="874" y="581" width="1" height="1" fill="#b0b0b0"/><rect x="907" y="581" width="1" height="1" fill="#b0b0b0"/><rect x="939" y="581" width="1" height="1" fill="#b0b0b0"/><rect x="972" y="581" width="1" height="1" fill="#b0b0b0"/><rect x="1004" y="581" width="1" height="1" fill="#b0b0b0"/><rect x="1036" y="581" width="1" height="1" fill="#b0b0b0"/><rect x="1069" y="581" width="1" height="1" fill="#b0b0b0"/><rect x="1101" y="581" width="1" height="1" fill="#b0b0b0"/><rect x="1134" y="581" width="1" height="1" fill="#b0b0b0"/><rect x="1166" y="581" width="1" height="1" fill="#b0b0b0"/><rect x="1198" y="581" width="1" height="1" fill="#b0b0b0"/><rect x="1231" y="581" width="1" height="1" fill="#b0b0b0"/><rect x="1263" y="581" width="1" height="1" fill="#b0b0b0"/><rect x="1296" y="581" width="1" height="1" fill="#b0b0b0"/><rect x="1328" y="581" width="1" height="1" fill="#b0b0b0"/><rect x="62" y="682" width="1" height="1" fill="#b0b0b0"/><rect x="94" y="682" width="1" height="1" fill="#b0b0b0"/><rect x="127" y="682" width="1" height="1" fill="#b0b0b0"/><rect x="159" y="682" width="1" height="1" fill="#b0b0b0"/><rect x="192" y="682" width="1" height="1" fill="#b0b0b0"/><rect x="224" y="682" width="1" height="1" fill="#b0b0b0"/><rect x="257" y="682" width="1" height="1" fill="#b0b0b0"/><rect x="289" y="682" width="1" height="1" fill="#b0b0b0"/><rect x="322" y="682" width="1" height="1" fill="#b0b0b0"/><rect x="354" y="682" width="1" height="1" fill="#b0b0b0"/><rect x="387" y="682" width="1" height="1" fill="#b0b0b0"/><rect x="419" y="682" width="1" height="1" fill="#b0b0b0"/><rect x="452" y="682" width="1" height="1" fill="#b0b0b0"/><rect x="484" y="682" width="1" height="1" fill="#b0b0b0"/><rect x="517" y="682" width="1" height="1" fill="#b0b0b0"/><rect x="549" y="682" width="1" height="1" fill="#b0b0b0"/><rect x="582" y="682" width="1" height="1" fill="#b0b0b0"/><rect x="614" y="682" width="1" height="1" fill="#b0b0b0"/><rect x="647" y="682" width="1" height="1" fill="#b0b0b0"/><rect x="679" y="682" width="1" height="1" fill="#b0b0b0"/><rect x="712" y="682" width="1" height="1" fill="#b0b0b0"/><rect x="744" y="682" width="1" height="1" fill="#b0b0b0"/><rect x="777" y="682" width="1" height="1" fill="#b0b0b0"/><rect x="809" y="682" width="1" height="1" fill="#b0b0b0"/><rect x="842" y="682" width="1" height="1" fill="#b0b0b0"/><rect x="874" y="682" width="1" height="1" fill="#b0b0b0"/><rect x="907" y="682" width="1" height="1" fill="#b0b0b0"/><rect x="939" y="682" width="1" height="1" fill="#b0b0b0"/><rect x="972" y="682" width="1" height="1" fill="#b0b0b0"/><rect x="1004" y="682" width="1" height="1" fill="#b0b0b0"/><rect x="1036" y="682" width="1" height="1" fill="#b0b0b0"/><rect x="1069" y="682" width="1" height="1" fill="#b0b0b0"/><rect x="1101" y="682" width="1" height="1" fill="#b0b0b0"/><rect x="1134" y="682" width="1" height="1" fill="#b0b0b0"/><rect x="1166" y="682" width="1" height="1" fill="#b0b0b0"/><rect x="1198" y="682" width="1" height="1" fill="#b0b0b0"/><rect x="1231" y="682" width="1" height="1" fill="#b0b0b0"/><rect x="1263" y="682" width="1" height="1" fill="#b0b0b0"/><rect x="1296" y="682" width="1" height="1" fill="#b0b0b0"/><rect x="1328" y="682" width="1" height="1" fill="#b0b0b0"/>
<!-- trigger marker -->
<polygon points="202,58 216,58 216,70 209,77 202,70" fill="#ff8000" shape-rendering="auto"/>
<rect x="205.5" y="60.3" width="8.5" height="1.6" fill="#3a2a10" shape-rendering="auto"/>
<rect x="209" y="60.3" width="1.7" height="9.5" fill="#3a2a10" shape-rendering="auto"/>
<g shape-rendering="auto"><polygon points="7,122 22,122 28.5,129 22,136 7,136" fill="#ffff00"/><path d="M13,126.5 L15.6,124.5 L15.6,133.5" fill="none" stroke="#000" stroke-width="1.6"/><polygon points="7,220 22,220 28.5,227 22,234 7,234" fill="#00ffff"/><text x="15.2" y="231" font-size="11.5" text-anchor="middle" fill="#000" font-family="Liberation Sans, sans-serif">2</text><polygon points="7,318 22,318 28.5,325 22,332 7,332" fill="#ff00ff"/><text x="15.2" y="329" font-size="11.5" text-anchor="middle" fill="#000" font-family="Liberation Sans, sans-serif">3</text><polygon points="7,416.5 22,416.5 28.5,423.5 22,430.5 7,430.5" fill="#00ff00"/><text x="15.2" y="427.5" font-size="11.5" text-anchor="middle" fill="#000" font-family="Liberation Sans, sans-serif">4</text><polygon points="7,515 22,515 28.5,522 22,529 7,529" fill="#0080ff"/><text x="15.2" y="526" font-size="11.5" text-anchor="middle" fill="#000" font-family="Liberation Sans, sans-serif">5</text><polygon points="7,614 22,614 28.5,621 22,628 7,628" fill="#ffc860"/><text x="15.2" y="625" font-size="11.5" text-anchor="middle" fill="#000" font-family="Liberation Sans, sans-serif">6</text><polygon points="7,711.5 22,711.5 28.5,718.5 22,725.5 7,725.5" fill="#8000ff"/><text x="15.2" y="722.5" font-size="11.5" text-anchor="middle" fill="#000" font-family="Liberation Sans, sans-serif">7</text></g>
<g shape-rendering="auto" fill="none" stroke-linejoin="round"><polyline points="31.0,128.50 33.5,128.50 54.7,128.50 95.1,128.50 142.0,128.50 182.4,128.50 203.6,128.50 206.1,128.50 206.2,131.00 206.2,132.89 206.3,135.25 206.4,137.61 206.4,139.50 206.5,142.00 206.7,144.49 206.9,147.85 207.3,152.77 207.6,158.23 208.0,163.15 208.2,166.51 208.4,169.00 208.5,171.50 208.6,174.92 208.8,179.96 209.0,185.54 209.2,190.58 209.3,194.00 209.4,196.50 209.5,199.00 209.6,200.90 209.7,203.40 209.7,206.10 209.8,208.60 209.9,210.50 210.0,213.00 210.1,210.50 210.2,207.79 210.3,203.95 210.5,199.75 210.6,195.91 210.7,193.20 210.8,190.70 210.8,188.20 210.9,183.05 211.0,174.92 211.2,165.78 211.3,157.65 211.4,152.50 211.4,150.00 211.5,147.50 211.6,145.04 211.8,141.62 211.9,137.88 212.1,134.46 212.2,132.00 212.3,129.50 213.9,131.32 216.2,133.40 217.8,132.78 219.6,131.23 221.5,129.54 223.0,128.50 225.5,128.44 227.4,128.40 229.8,128.35 232.2,128.30 234.1,128.26 236.6,128.20 237.8,127.21 239.1,125.61 240.4,123.68 241.5,121.70 242.4,119.78 243.2,117.68 243.9,115.48 244.6,113.23 245.3,111.00 245.9,108.60 246.4,106.03 246.9,103.51 247.5,101.24 248.3,99.40 250.0,97.09 252.0,96.00 253.4,96.49 255.0,97.77 256.8,99.45 258.4,101.09 260.0,102.30 262.4,103.25 264.8,104.30 266.2,105.55 267.8,107.19 269.3,108.97 270.6,110.66 271.6,112.00 272.9,114.12 274.2,116.14 275.7,118.56 277.0,120.58 278.3,122.70 280.3,124.29 282.2,125.00 282.7,122.56 283.2,120.46 283.8,117.64 284.5,114.56 285.1,111.74 285.6,109.64 286.1,107.20 286.6,104.76 287.1,102.71 287.7,99.95 288.4,96.95 289.0,94.19 289.5,92.14 290.0,89.70 290.9,90.61 292.3,92.87 293.8,95.50 294.9,97.50 296.1,99.70 297.1,101.48 298.3,103.75 299.5,106.02 300.5,107.80 301.7,110.00 302.5,112.36 303.6,115.50 305.2,120.11 306.9,125.19 308.5,129.80 309.6,132.94 310.4,135.30 311.3,136.94 312.6,139.04 314.0,141.29 315.3,143.38 316.2,145.00 317.3,147.27 318.8,150.67 321.2,155.77 323.8,161.43 326.2,166.53 327.7,169.93 328.8,172.20 330.1,173.57 331.8,175.13 333.7,176.68 335.6,178.00 337.8,179.46 340.0,180.71 341.5,181.00 341.9,178.53 342.4,175.68 343.0,171.60 343.8,167.10 344.4,163.02 344.9,160.17 345.3,157.70 345.8,155.25 346.4,152.39 347.3,148.30 348.2,143.80 349.1,139.71 349.7,136.85 350.2,134.40 351.5,132.31 353.3,129.99 355.0,128.50 357.5,128.49 365.9,128.45 380.1,128.39 396.3,128.31 410.5,128.25 418.9,128.21 421.4,128.20 423.0,127.58 424.3,126.60 425.1,124.23 425.8,122.08 426.7,119.52 427.4,117.37 428.2,115.00 429.1,112.98 430.2,110.39 431.6,108.06 433.0,106.80 435.5,107.38 437.9,109.10 439.9,111.02 441.7,113.40 442.7,115.12 443.6,117.05 444.5,119.01 445.6,120.80 447.2,122.71 448.9,124.45 450.5,126.20 452.0,128.67 453.4,130.90 455.2,132.69 456.9,133.40 457.6,132.29 458.2,130.05 458.6,127.30 458.9,124.64 459.2,122.70 459.8,120.27 460.3,118.12 461.0,115.58 461.5,113.43 462.1,111.00 463.0,108.77 464.2,106.26 465.6,104.90 467.2,105.60 468.9,107.20 470.5,108.57 472.1,110.17 473.4,112.00 474.2,113.88 474.8,116.03 475.2,118.12 475.7,119.80 476.7,122.11 477.6,124.33 478.7,126.97 479.6,129.19 480.6,131.50 481.3,133.90 481.9,135.82 482.6,138.37 483.4,141.13 484.1,143.68 484.7,145.60 485.4,148.00 486.1,149.72 487.0,151.93 488.0,154.34 489.2,156.66 490.3,158.60 491.7,160.79 493.2,162.68 494.6,163.50 496.5,162.00 498.1,159.60 498.9,157.24 499.6,155.29 500.5,152.80 501.4,150.31 502.1,148.36 502.9,146.00 503.7,143.65 504.5,141.69 505.3,139.20 506.2,136.71 507.0,134.75 507.8,132.40 509.1,130.21 510.7,128.50 513.2,128.49 520.9,128.45 533.9,128.39 548.6,128.31 561.6,128.25 569.3,128.21 571.8,128.20 573.8,126.60 575.2,127.43 576.7,128.50 579.2,128.50 581.0,128.50 583.4,128.50 585.9,128.50 588.3,128.50 590.1,128.50 592.6,128.50 594.6,126.99 596.5,124.70 597.7,122.49 598.9,120.00 600.4,117.90 602.5,116.21 605.0,114.89 607.2,114.60 608.7,115.68 609.9,117.63 611.1,119.80 612.2,121.56 613.4,123.54 614.6,125.60 615.7,127.63 616.9,129.50 618.1,131.61 619.4,133.81 620.6,135.56 621.7,136.30 623.6,134.83 625.0,132.40 625.5,129.95 625.9,128.05 626.5,125.52 627.0,122.78 627.6,120.25 628.0,118.35 628.5,115.90 629.4,114.02 630.6,111.66 632.0,109.62 633.4,108.70 635.2,109.69 637.0,111.94 638.3,114.00 639.2,116.34 639.8,118.13 640.7,120.48 641.7,123.02 642.6,125.37 643.2,127.16 644.1,129.50 645.0,131.84 645.6,133.63 646.5,135.98 647.5,138.52 648.4,140.87 649.0,142.66 649.9,145.00 650.8,146.85 652.0,149.19 653.4,151.23 654.8,152.20 656.5,151.48 658.3,149.71 659.6,148.00 660.6,145.69 661.5,143.47 662.6,140.83 663.5,138.61 664.5,136.30 665.4,134.70 666.6,132.75 667.9,130.87 669.3,129.50 671.3,128.58 673.2,128.20 675.7,128.21 685.8,128.25 703.4,128.31 723.6,128.39 741.2,128.45 751.3,128.49 753.8,128.50 755.2,127.86 756.7,127.20 758.5,127.32 760.4,127.20 761.7,126.16 763.1,124.47 764.5,122.55 765.9,120.84 767.2,119.80 769.1,119.39 771.1,119.80 772.7,120.75 774.5,122.24 776.2,123.96 777.9,125.60 779.4,127.14 780.9,128.77 782.3,130.28 783.7,131.50 785.7,132.71 787.6,133.40 790.5,133.40 791.2,132.04 791.5,129.77 791.7,127.02 791.9,124.19 792.4,121.70 793.2,119.38 794.1,116.87 795.1,114.54 796.2,112.78 797.3,112.00 799.0,112.85 800.8,114.95 802.1,116.90 803.0,119.23 803.7,120.99 804.6,123.20 805.4,125.41 806.1,127.17 807.0,129.50 808.0,131.77 808.9,133.55 809.9,135.80 810.9,138.05 811.8,139.83 812.8,142.10 814.4,144.25 816.6,146.60 818.6,147.60 820.0,146.60 821.3,144.48 822.6,142.07 823.5,140.20 824.7,137.99 825.5,136.37 826.6,134.35 827.7,132.33 828.5,130.71 829.7,128.50 831.3,128.06 833.6,127.98 836.0,128.16 838.0,128.50 839.6,129.42 841.0,130.10 842.5,129.39 843.9,128.50 846.4,128.50 856.6,128.50 874.4,128.50 894.7,128.50 912.5,128.50 922.7,128.50 925.2,128.50 927.1,126.62 929.1,124.30 931.5,122.58 934.0,121.70 936.4,122.54 938.8,124.30 940.3,125.78 941.7,127.61 943.2,129.44 944.7,130.90 947.4,132.68 950.1,133.40 952.4,132.51 954.4,130.50 955.1,128.61 955.5,126.13 955.7,123.41 956.0,120.84 956.7,118.80 958.0,116.82 959.6,115.22 961.2,114.60 962.8,115.50 964.5,117.52 966.0,119.80 967.1,121.62 968.2,123.76 969.2,125.96 970.1,127.96 970.9,129.50 972.2,131.63 973.3,133.46 974.8,135.80 976.2,138.14 977.3,139.97 978.6,142.10 980.5,142.36 982.5,141.70 983.6,140.21 984.4,137.94 985.3,135.48 986.4,133.40 988.2,131.35 990.3,129.58 992.2,128.50 994.7,128.50 999.7,128.50 1007.7,128.50 1016.5,128.50 1024.5,128.50 1029.5,128.50 1032.0,128.50 1034.0,130.10 1035.9,128.50 1038.4,128.49 1044.9,128.45 1055.5,128.39 1067.6,128.31 1078.2,128.25 1084.7,128.21 1087.2,128.20 1089.1,127.37 1091.1,126.20 1093.0,125.03 1095.0,123.77 1096.9,123.10 1099.3,123.58 1101.7,124.70 1104.1,125.98 1106.6,127.60 1108.3,129.16 1110.1,131.10 1111.8,132.74 1113.4,133.40 1115.5,132.10 1117.3,129.50 1118.2,127.59 1118.9,125.20 1119.6,122.69 1120.3,120.43 1121.2,118.80 1122.8,117.34 1124.5,116.90 1126.2,118.57 1128.0,121.20 1129.6,122.89 1131.3,124.63 1132.8,126.60 1133.8,128.64 1134.7,130.92 1135.6,133.21 1136.7,135.30 1138.1,137.34 1139.8,139.42 1141.5,141.04 1143.1,141.70 1144.9,140.84 1146.6,138.85 1148.3,136.70 1149.5,134.87 1150.7,132.80 1151.8,130.88 1153.2,129.50 1156.1,128.50 1159.0,128.50 1160.4,129.25 1161.9,130.10 1163.9,130.42 1166.4,130.55 1168.9,130.45 1170.7,130.10 1172.6,128.50 1175.1,128.50 1182.2,128.50 1194.0,128.50 1207.3,128.50 1219.1,128.50 1226.2,128.50 1228.7,128.50 1231.1,126.90 1233.4,128.50 1235.9,128.50 1237.7,128.50 1240.0,128.50 1242.3,128.50 1244.1,128.50 1246.6,128.50 1248.9,126.90 1250.3,127.88 1252.0,128.90 1253.6,128.40 1255.4,127.18 1257.3,125.86 1259.0,125.00 1261.4,124.67 1263.7,125.00 1266.0,126.34 1268.3,128.10 1270.0,129.20 1271.8,130.41 1273.6,131.44 1275.3,132.00 1277.3,132.03 1279.2,131.20 1280.4,129.66 1281.4,127.31 1282.4,124.67 1283.4,122.29 1284.6,120.70 1286.5,119.70 1288.5,119.60 1291.1,120.84 1293.2,122.70 1294.4,124.90 1295.2,126.51 1296.3,128.50 1297.4,130.49 1298.2,132.10 1299.4,134.30 1300.7,135.72 1302.3,137.20 1304.0,138.20 1306.0,138.62 1307.9,138.20 1309.0,136.56 1309.8,134.13 1311.0,132.00 1312.9,130.46 1315.2,129.24 1317.2,128.50 1319.7,128.50 1323.2,128.50 1328.3,128.50 1333.9,128.50 1339.0,128.50 1342.5,128.50 1345.0,128.50" stroke="#f0f000" stroke-width="1.25"/>
<polyline points="31.0,227.50 33.5,227.50 54.7,227.50 95.1,227.50 142.0,227.50 182.4,227.50 203.6,227.50 206.1,227.50 206.7,228.79 207.1,230.96 207.2,233.52 207.4,235.97 207.5,237.80 207.8,240.28 208.1,242.19 208.5,244.60 208.8,247.01 209.1,248.92 209.4,251.40 209.5,253.61 209.7,256.50 209.8,259.02 210.0,260.10 210.2,259.03 210.5,256.51 210.8,253.61 211.0,251.40 211.1,248.90 211.2,246.86 211.4,244.13 211.5,241.17 211.7,238.44 211.8,236.40 211.9,233.90 212.1,231.67 212.5,229.07 213.3,227.10 214.6,226.05 216.2,225.70 218.6,227.01 221.1,228.40 222.6,228.04 224.0,227.50 226.5,227.50 228.9,227.50 231.7,227.50 234.1,227.50 236.6,227.50 238.6,228.37 240.5,230.00 241.5,231.59 242.4,233.67 243.2,235.94 243.9,238.06 244.4,239.70 245.1,242.10 245.6,244.04 246.4,246.50 247.1,248.96 247.6,250.90 248.3,253.30 249.3,255.76 250.6,258.58 252.1,260.10 254.0,259.20 256.0,257.20 257.6,255.31 259.2,253.16 260.9,251.40 262.8,250.42 264.8,249.40 266.2,248.14 267.7,246.49 269.2,244.69 270.5,243.01 271.6,241.70 273.1,239.73 274.6,237.89 276.3,235.71 277.8,233.87 279.3,231.90 280.1,230.35 281.0,228.27 281.9,225.99 282.7,223.86 283.2,222.20 283.7,219.74 284.0,217.98 284.4,215.69 284.9,213.21 285.3,210.92 285.6,209.16 286.1,206.70 286.4,204.22 286.8,201.37 287.3,197.29 287.8,192.81 288.3,188.73 288.7,185.88 289.0,183.40 289.4,181.73 290.0,179.57 290.7,177.28 291.7,175.21 292.9,173.70 294.8,172.60 297.2,171.91 299.6,171.72 301.7,172.10 303.5,173.39 305.2,175.46 306.5,177.69 307.5,179.50 308.2,181.89 308.8,183.68 309.5,186.03 310.3,188.57 311.0,190.92 311.6,192.71 312.3,195.10 312.8,197.54 313.3,199.58 313.9,202.31 314.6,205.29 315.2,208.02 315.7,210.06 316.2,212.50 316.5,214.98 316.9,217.71 317.4,221.58 317.9,225.82 318.4,229.69 318.8,232.42 319.1,234.90 319.9,236.79 321.0,239.11 322.4,241.51 324.0,243.60 325.7,245.29 327.6,246.79 329.6,248.15 331.7,249.40 334.0,250.77 336.6,252.17 338.9,253.15 340.5,253.30 341.5,250.99 342.4,248.80 343.4,246.20 344.3,244.01 345.3,241.70 346.3,239.41 347.2,237.50 348.2,235.05 349.3,232.60 350.2,230.69 351.2,228.40 353.1,227.81 355.8,227.58 358.7,227.53 360.9,227.50 363.4,227.50 365.6,227.50 368.4,227.50 371.1,227.50 373.3,227.50 375.8,227.50 377.8,228.40 379.7,227.50 382.2,227.50 387.7,227.50 396.6,227.50 406.5,227.50 415.4,227.50 420.9,227.50 423.4,227.50 424.9,228.86 426.3,231.00 427.1,232.88 427.8,235.12 428.4,237.47 429.2,239.70 430.1,241.93 431.0,244.26 432.0,246.26 433.1,247.50 436.0,247.50 437.6,246.15 439.3,244.01 440.9,241.70 442.1,240.07 443.2,238.30 444.4,236.47 445.5,234.65 446.7,232.90 448.2,230.94 449.7,229.04 451.1,227.13 452.5,225.10 453.6,223.16 454.8,221.03 455.9,218.90 456.8,216.96 457.4,215.40 458.0,212.96 458.5,210.55 459.2,207.65 459.7,205.24 460.3,202.80 460.8,200.35 461.3,197.54 462.1,193.55 463.0,189.15 463.8,185.16 464.3,182.35 464.8,179.90 466.7,180.40 468.6,181.80 469.1,184.24 469.5,185.96 470.0,188.20 470.5,190.60 471.0,192.84 471.4,194.56 471.9,197.00 472.3,199.47 472.8,202.58 473.5,207.11 474.2,212.09 474.9,216.62 475.4,219.73 475.8,222.20 476.4,223.86 477.4,225.84 478.5,227.96 479.7,230.00 480.9,231.80 482.1,233.65 483.5,235.47 485.0,237.18 486.5,238.70 488.4,240.29 490.4,241.75 492.5,242.91 494.3,243.60 496.3,243.77 498.2,243.20 499.8,241.89 501.4,239.95 503.0,237.80 504.1,235.97 505.1,233.84 506.2,231.68 507.3,229.77 508.8,228.40 510.9,227.61 513.4,227.41 516.0,227.48 518.5,227.50 521.1,227.37 523.9,227.28 526.4,227.29 528.3,227.50 530.2,228.40 531.5,228.04 533.1,227.50 536.1,227.30 538.9,227.50 540.9,228.40 542.3,228.02 543.8,227.50 546.3,227.50 550.7,227.50 557.6,227.50 565.3,227.50 572.2,227.50 576.6,227.50 579.1,227.50 581.1,228.40 582.4,228.04 584.0,227.50 585.9,227.25 588.3,227.06 590.7,227.10 592.7,227.50 594.8,228.94 596.6,231.00 597.9,233.24 599.1,235.80 600.5,237.80 602.9,239.18 605.3,239.70 606.8,239.50 608.3,238.70 609.5,237.43 610.8,235.57 612.0,233.48 613.2,231.50 614.1,230.00 615.5,227.92 616.6,226.27 618.0,224.20 619.3,222.13 620.4,220.48 621.8,218.40 622.5,216.92 623.3,215.02 624.1,212.89 624.9,210.69 625.7,208.60 626.5,206.33 627.2,203.79 627.9,201.37 628.7,199.47 629.6,198.50 631.1,198.70 632.5,199.90 633.3,201.38 633.8,203.46 634.3,205.87 634.8,208.34 635.4,210.60 636.1,212.59 636.8,214.56 637.5,216.49 638.3,218.41 639.3,220.30 640.5,222.41 642.0,224.61 643.5,226.73 645.0,228.59 646.1,230.00 647.9,231.76 649.5,233.38 651.5,235.32 653.1,236.94 654.9,238.70 656.6,238.63 658.7,237.92 660.7,236.80 662.2,235.12 663.6,232.86 665.0,230.62 666.5,229.00 669.0,227.84 671.4,227.50 672.9,227.95 674.3,228.40 675.8,228.00 677.2,227.50 679.7,227.50 683.1,227.50 688.0,227.50 693.6,227.50 698.5,227.50 701.9,227.50 704.4,227.50 705.3,228.40 707.3,227.50 709.8,227.50 716.2,227.50 726.8,227.50 738.7,227.50 749.3,227.50 755.7,227.50 758.2,227.50 759.7,228.58 761.4,230.26 763.0,231.90 764.6,233.42 766.2,234.90 767.9,235.80 770.3,235.83 772.7,234.90 774.1,233.60 775.4,231.76 776.6,229.87 777.6,228.40 779.3,226.61 780.7,225.19 782.5,223.40 784.2,221.61 785.6,220.19 787.3,218.40 788.4,216.64 789.7,214.12 791.1,211.49 792.4,209.43 793.7,208.60 794.9,209.35 796.0,211.15 797.0,213.38 798.0,215.40 799.0,217.72 799.9,220.05 800.9,221.80 802.3,222.51 803.8,223.20 805.2,224.73 806.6,226.83 808.1,229.07 809.6,231.00 811.5,232.98 813.4,234.75 815.4,235.80 817.8,235.80 820.3,234.90 821.9,233.86 823.6,232.35 825.3,230.68 827.1,229.16 829.0,228.10 831.5,227.48 834.2,227.24 836.8,227.28 838.7,227.50 840.7,228.40 842.7,227.95 844.6,227.50 846.5,228.40 848.2,228.63 850.6,228.74 853.1,228.74 855.5,228.63 857.2,228.40 859.1,227.50 861.5,227.29 864.0,227.50 865.9,228.40 867.3,228.03 868.8,227.50 871.3,227.50 878.5,227.50 890.4,227.50 903.9,227.50 915.8,227.50 923.0,227.50 925.5,227.50 926.9,228.05 928.4,229.00 930.2,231.35 932.3,233.50 935.4,234.00 938.2,233.50 939.8,231.57 941.2,229.86 942.9,227.84 944.3,226.13 945.9,224.20 948.1,223.12 950.8,221.80 952.5,220.03 954.3,217.70 956.1,215.69 957.6,214.90 958.9,215.99 960.1,218.20 961.5,220.30 963.1,221.58 964.8,222.74 966.7,223.89 968.3,225.10 970.0,226.70 971.5,228.37 973.1,230.00 974.9,231.98 976.8,233.94 978.9,234.90 980.8,234.39 982.8,233.00 984.8,231.33 986.7,230.00 988.6,228.98 990.5,228.12 992.5,227.50 994.9,227.20 997.6,227.13 1000.2,227.24 1002.2,227.50 1004.2,228.40 1005.6,228.02 1007.1,227.50 1009.6,227.50 1011.5,227.50 1014.0,227.50 1016.7,227.50 1019.2,227.50 1021.1,227.50 1023.6,227.50 1026.1,228.40 1028.4,227.50 1030.9,227.50 1038.4,227.50 1051.0,227.50 1065.4,227.50 1078.0,227.50 1085.5,227.50 1088.0,227.50 1089.5,228.16 1091.3,229.28 1093.3,230.55 1095.2,231.67 1096.8,232.30 1098.8,232.40 1100.7,231.90 1103.1,230.44 1105.5,228.40 1107.1,226.92 1108.7,225.22 1110.5,223.57 1112.3,222.20 1114.3,221.09 1116.4,220.12 1118.5,219.47 1120.7,219.30 1122.7,219.69 1124.8,220.52 1126.9,221.64 1129.0,222.92 1130.8,224.20 1132.7,225.84 1134.4,227.72 1136.0,229.53 1137.6,231.00 1140.1,232.74 1142.8,233.50 1144.6,232.92 1146.7,231.61 1148.8,229.99 1151.0,228.48 1153.1,227.50 1155.7,227.08 1158.4,227.02 1160.9,227.20 1162.8,227.50 1164.8,228.40 1167.2,228.60 1169.6,228.40 1171.6,227.50 1174.1,227.49 1184.3,227.45 1202.0,227.39 1222.4,227.31 1240.1,227.25 1250.3,227.21 1252.8,227.20 1254.5,228.23 1256.5,229.95 1258.6,231.57 1260.6,232.30 1262.5,231.80 1264.4,230.55 1266.3,229.00 1268.3,227.60 1270.1,226.50 1271.9,225.31 1273.8,224.16 1275.7,223.18 1277.6,222.50 1280.0,222.10 1282.4,222.01 1284.8,222.16 1287.0,222.50 1289.2,223.07 1291.2,223.88 1293.2,225.00 1294.7,226.21 1296.3,227.76 1297.8,229.38 1299.3,230.82 1300.9,231.80 1303.0,232.45 1305.1,232.63 1307.1,232.30 1308.8,231.30 1310.4,229.72 1312.0,228.16 1313.4,227.20 1315.9,227.20 1318.0,227.20 1320.8,227.20 1323.8,227.20 1326.6,227.20 1328.7,227.20 1331.2,227.20 1333.5,228.40 1335.9,227.20 1338.2,227.00 1341.2,227.02 1343.9,227.13 1345.0,227.20" stroke="#00d8d8" stroke-width="1.25"/>
<polyline points="31.0,326.00 33.5,326.00 54.7,326.00 95.1,326.00 142.0,326.00 182.4,326.00 203.6,326.00 206.1,326.00 206.8,327.50 207.3,329.99 207.6,332.91 207.9,335.70 208.3,338.34 208.7,341.43 209.1,344.36 209.5,346.55 209.8,347.40 210.1,346.53 210.3,344.34 210.5,341.41 210.7,338.34 211.0,335.70 211.3,332.87 211.6,329.89 212.1,327.39 212.9,326.00 214.4,326.34 216.2,327.00 218.7,325.81 221.1,324.70 222.5,325.24 224.0,326.00 225.9,326.32 228.4,326.56 231.1,326.64 233.6,326.48 235.6,326.00 238.0,324.23 239.5,322.10 240.0,319.64 240.3,317.88 240.7,315.59 241.2,313.11 241.6,310.82 241.9,309.06 242.4,306.60 242.8,304.13 243.3,301.02 244.0,296.49 244.7,291.51 245.4,286.98 245.9,283.87 246.3,281.40 246.8,278.95 247.3,276.76 247.9,273.77 248.6,270.53 249.2,267.54 249.7,265.35 250.2,262.90 252.0,262.41 254.1,262.90 255.1,264.10 255.8,266.02 256.5,268.30 257.2,270.61 258.0,272.60 259.2,274.51 260.5,276.33 261.8,277.99 262.8,279.40 263.9,281.64 264.8,283.45 266.0,285.88 267.4,288.52 268.6,290.95 269.5,292.76 270.6,295.00 271.5,297.34 272.4,299.80 273.7,303.26 275.2,307.04 276.5,310.50 277.4,312.96 278.3,315.30 279.0,317.04 279.9,319.31 281.0,321.78 282.1,324.12 283.2,326.00 285.3,328.16 287.1,329.90 288.0,332.24 289.0,335.11 290.6,339.26 292.3,343.84 293.9,347.99 294.9,350.86 295.8,353.20 296.9,355.47 297.6,357.14 298.7,359.32 299.7,361.68 300.8,363.86 301.5,365.53 302.6,367.80 303.9,369.38 305.7,371.07 307.5,372.20 309.7,372.60 311.4,372.20 311.8,369.73 312.2,366.67 312.9,362.24 313.7,357.36 314.4,352.93 314.8,349.87 315.2,347.40 315.8,345.29 316.6,342.57 317.6,340.16 318.5,339.00 320.4,340.60 322.1,341.96 324.1,343.70 326.2,345.44 327.9,346.80 329.8,348.40 331.6,349.56 333.9,350.98 336.4,352.06 338.5,352.20 340.0,351.21 341.4,349.40 342.6,347.23 343.6,345.11 344.4,343.50 345.3,341.17 346.1,339.10 347.2,336.28 348.4,333.22 349.5,330.40 350.3,328.33 351.2,326.00 353.7,326.00 355.9,326.00 359.0,326.00 362.2,326.00 365.3,326.00 367.5,326.00 370.0,326.00 371.4,325.27 372.9,324.70 374.4,325.27 375.8,326.00 378.3,326.00 383.8,326.00 392.7,326.00 402.6,326.00 411.5,326.00 417.0,326.00 419.5,326.00 421.3,324.81 423.1,322.96 424.4,321.20 424.8,318.74 425.2,316.83 425.6,314.31 426.1,311.59 426.5,309.07 426.9,307.16 427.3,304.70 427.9,302.27 428.5,299.95 429.3,296.75 430.1,293.25 430.9,290.05 431.5,287.73 432.1,285.30 433.4,285.83 435.5,287.46 437.5,289.45 438.9,291.10 439.6,293.49 440.3,295.82 441.3,299.04 442.4,302.56 443.4,305.78 444.1,308.11 444.8,310.50 445.8,312.81 446.7,315.00 447.7,317.60 448.6,319.79 449.6,322.10 450.3,324.49 450.9,326.28 451.7,328.63 452.4,331.17 453.2,333.52 453.8,335.31 454.5,337.70 455.5,339.90 456.9,342.46 458.3,344.50 459.8,345.45 461.3,346.40 462.6,348.83 463.9,351.80 465.1,353.20 466.0,352.36 466.8,350.37 467.7,347.82 468.4,345.32 469.0,343.50 469.8,341.13 470.5,338.98 471.4,336.42 472.1,334.27 472.9,331.90 473.9,329.75 475.4,327.33 476.8,326.00 478.2,326.38 479.7,327.60 481.0,329.12 482.3,331.17 483.5,333.23 484.6,334.80 486.4,336.53 488.0,338.05 489.9,339.85 491.5,341.37 493.3,343.10 494.7,342.62 496.4,341.33 498.3,339.54 500.3,337.56 502.0,335.70 503.5,333.69 505.0,331.34 506.3,329.03 507.6,327.12 508.8,326.00 511.3,326.00 521.1,326.00 538.1,326.00 557.6,326.00 574.6,326.00 584.4,326.00 586.9,326.00 589.3,325.00 591.7,323.10 592.9,321.32 594.0,318.98 595.0,316.45 595.8,314.13 596.6,312.40 597.9,310.26 598.8,308.72 600.0,306.80 601.2,304.88 602.1,303.34 603.4,301.20 605.4,300.81 607.3,301.20 608.0,303.60 608.6,305.46 609.3,307.92 610.1,310.58 610.8,313.04 611.4,314.90 612.1,317.30 613.0,319.14 614.1,321.25 615.0,323.10 615.6,325.52 616.1,327.29 616.6,329.60 617.3,332.10 617.8,334.41 618.3,336.18 618.9,338.60 620.1,340.52 621.8,342.95 623.5,345.00 624.8,345.80 625.8,343.52 626.6,341.66 627.7,339.30 628.8,336.94 629.6,335.08 630.6,332.80 631.6,330.53 632.5,328.75 633.5,326.50 634.5,324.25 635.4,322.47 636.4,320.20 638.2,320.78 640.3,322.50 641.4,323.98 642.5,325.92 643.6,328.05 644.7,330.13 646.1,331.90 647.7,333.45 649.4,334.97 651.3,336.31 653.1,337.28 654.9,337.70 657.3,337.21 659.6,335.86 661.7,334.20 663.0,332.64 664.2,330.77 665.3,328.96 666.5,327.60 668.5,326.52 670.4,326.00 672.9,326.00 675.0,326.00 677.7,326.00 680.4,326.00 682.5,326.00 685.0,326.00 686.4,326.89 687.9,327.60 689.4,326.89 690.8,326.00 693.3,326.00 701.5,326.00 715.5,326.00 731.5,326.00 745.5,326.00 753.7,326.00 756.2,326.00 758.3,324.29 760.1,322.10 761.4,319.94 762.2,318.41 763.4,316.42 764.6,314.28 765.8,312.29 766.6,310.76 767.9,308.60 769.8,309.14 771.7,310.50 772.8,312.77 773.5,314.44 774.6,316.62 775.6,318.98 776.7,321.16 777.4,322.83 778.5,325.10 779.6,327.33 780.4,328.92 781.5,330.90 782.5,332.88 783.3,334.47 784.4,336.70 786.0,338.34 788.0,340.03 789.8,340.60 791.2,339.05 792.3,336.23 793.1,333.80 793.9,331.42 794.5,329.39 795.4,326.80 796.2,324.21 796.8,322.18 797.6,319.80 799.0,320.20 800.9,321.55 802.8,323.10 804.5,324.90 806.1,326.96 807.7,328.90 809.2,330.58 810.8,332.16 812.5,333.40 815.4,334.55 818.3,334.80 820.9,333.72 823.2,331.90 824.6,330.26 825.8,328.40 827.1,327.00 828.5,326.31 830.0,326.00 832.5,326.00 843.9,326.00 864.1,326.00 887.3,326.00 907.5,326.00 918.9,326.00 921.4,326.00 923.4,324.76 925.2,323.10 926.5,320.99 927.8,318.96 929.4,316.54 930.7,314.51 932.0,312.40 933.2,313.07 934.8,314.82 936.4,317.06 937.9,319.20 938.9,320.88 939.9,322.67 940.8,324.50 941.7,326.30 942.7,328.00 943.9,329.86 945.1,331.68 946.4,333.36 947.6,334.80 949.2,336.63 950.9,337.70 952.6,337.52 954.0,336.70 954.7,334.30 955.3,332.16 956.0,329.64 956.6,327.50 957.3,325.10 958.4,323.12 960.0,320.96 961.7,319.80 963.4,320.23 965.2,321.57 967.0,323.10 968.7,324.55 970.4,326.24 972.1,327.95 973.8,329.50 975.8,331.31 977.7,332.98 979.6,333.80 981.6,333.25 983.5,331.90 985.4,330.10 987.4,327.93 989.3,326.40 991.3,325.99 993.2,326.00 995.7,326.00 998.7,326.00 1003.0,326.00 1007.7,326.00 1012.0,326.00 1015.0,326.00 1017.5,326.00 1018.9,325.27 1020.4,324.70 1021.8,325.26 1023.3,326.00 1025.8,326.22 1028.2,326.00 1029.7,325.32 1031.1,324.70 1033.1,324.72 1035.0,325.10 1036.9,326.00 1039.4,326.00 1041.4,326.00 1044.2,326.00 1047.1,326.00 1049.9,326.00 1051.9,326.00 1054.4,326.00 1056.3,324.70 1057.7,325.25 1059.2,326.00 1061.7,326.00 1065.1,326.00 1070.1,326.00 1075.6,326.00 1080.6,326.00 1084.0,326.00 1086.5,326.00 1087.9,325.14 1089.4,323.70 1090.7,322.05 1092.2,319.77 1093.7,317.43 1095.1,315.59 1096.2,314.80 1098.0,316.52 1099.6,318.05 1101.6,319.85 1103.2,321.38 1105.0,323.10 1105.9,324.60 1106.8,326.66 1107.7,328.94 1108.8,331.10 1109.8,332.80 1111.7,335.06 1113.7,336.10 1115.7,334.65 1117.6,331.90 1118.4,330.15 1119.1,328.02 1119.8,325.82 1120.6,323.87 1121.5,322.50 1123.3,321.41 1125.3,321.20 1127.7,322.22 1130.2,324.10 1131.7,325.43 1133.3,327.09 1134.9,328.82 1136.5,330.37 1138.0,331.50 1140.4,332.60 1142.8,332.80 1144.5,332.14 1146.2,330.92 1147.9,329.55 1149.6,328.40 1152.2,326.95 1154.5,326.00 1157.0,326.00 1164.0,326.00 1175.6,326.00 1188.7,326.00 1200.3,326.00 1207.3,326.00 1209.8,326.00 1211.2,325.27 1212.7,324.70 1214.2,325.27 1215.6,326.00 1218.1,326.02 1219.9,326.03 1222.2,326.05 1224.4,326.07 1226.2,326.08 1228.7,326.10 1231.1,324.90 1232.6,325.63 1234.2,326.40 1236.1,325.67 1238.0,324.90 1239.5,325.41 1241.1,326.10 1244.0,326.37 1246.6,326.10 1248.1,324.90 1250.3,325.00 1252.8,324.90 1254.3,323.85 1255.8,322.14 1257.4,320.26 1258.8,318.68 1260.2,317.90 1262.0,318.21 1263.7,319.40 1264.9,320.78 1266.0,322.63 1267.1,324.61 1268.3,326.40 1270.1,328.36 1272.0,330.17 1273.8,331.80 1276.0,333.97 1278.0,335.00 1279.2,333.68 1280.3,331.16 1281.5,328.70 1282.7,326.91 1284.1,325.05 1285.5,323.45 1287.0,322.50 1289.3,322.40 1291.6,323.30 1293.1,324.50 1294.7,326.30 1296.3,328.28 1297.9,330.02 1299.4,331.10 1301.6,331.51 1304.0,331.10 1305.8,330.38 1307.8,329.21 1309.9,327.90 1311.8,326.77 1313.4,326.10 1315.9,326.10 1319.4,326.10 1324.5,326.10 1330.2,326.10 1335.3,326.10 1338.8,326.10 1341.3,326.10 1342.9,324.90 1345.0,325.30" stroke="#b400b4" stroke-width="1.8"/>
<polyline points="31.0,427.50 39.0,427.50 40.0,428.50 50.0,428.50 51.0,427.50 54.0,427.50 55.0,428.50 58.0,428.50 59.0,427.50 61.0,427.50 62.0,428.50 67.0,428.50 68.5,426.50 70.0,428.50 71.0,427.50 81.0,427.50 82.0,428.50 87.0,428.50 88.0,427.50 98.0,427.50 99.5,426.50 101.0,427.50 102.0,428.50 105.0,428.50 106.0,427.50 108.0,427.50 109.0,428.50 119.0,428.50 120.5,426.50 122.0,428.50 123.0,427.50 128.0,427.50 129.5,426.50 131.0,427.50 132.0,428.50 136.0,428.50 137.0,427.50 141.0,427.50 142.0,428.50 148.0,428.50 149.0,427.50 153.0,427.50 154.0,428.50 159.0,428.50 160.0,427.50 163.0,427.50 164.0,428.50 169.0,428.50 170.0,427.50 180.0,427.50 181.0,428.50 194.0,428.50 195.0,427.50 208.0,427.50 209.0,428.50 204.0,427.50 206.0,427.50 209.0,427.50 211.0,429.50 213.0,432.50 215.0,429.50 217.0,431.50 219.0,428.50 221.0,426.50 224.0,427.50 226.0,427.50 232.0,427.50 233.0,428.50 238.0,428.50 239.0,427.50 245.0,427.50 246.0,428.50 254.0,428.50 255.0,427.50 261.0,427.50 262.0,428.50 265.0,428.50 266.0,427.50 276.0,427.50 277.0,428.50 285.0,428.50 286.0,427.50 299.0,427.50 300.0,428.50 303.0,428.50 304.0,427.50 312.0,427.50 313.0,428.50 321.0,428.50 322.0,427.50 335.0,427.50 336.0,428.50 339.0,428.50 340.0,427.50 353.0,427.50 354.0,428.50 357.0,428.50 358.0,427.50 364.0,427.50 365.0,428.50 378.0,428.50 379.0,427.50 389.0,427.50 390.0,428.50 398.0,428.50 399.5,426.50 401.0,428.50 402.0,427.50 415.0,427.50 416.0,428.50 419.0,428.50 420.0,427.50 425.0,427.50 426.0,428.50 430.0,428.50 431.0,427.50 441.0,427.50 442.0,428.50 455.0,428.50 456.0,427.50 469.0,427.50 470.0,428.50 476.0,428.50 477.0,427.50 487.0,427.50 488.0,428.50 494.0,428.50 495.0,427.50 503.0,427.50 504.0,428.50 514.0,428.50 515.0,427.50 519.0,427.50 520.0,428.50 524.0,428.50 525.0,427.50 530.0,427.50 531.5,426.50 533.0,427.50 534.0,428.50 538.0,428.50 539.0,427.50 541.0,427.50 542.0,428.50 550.0,428.50 551.0,427.50 559.0,427.50 560.0,428.50 562.0,428.50 563.0,427.50 573.0,427.50 574.0,428.50 584.0,428.50 585.0,427.50 595.0,427.50 596.0,428.50 599.0,428.50 600.0,427.50 613.0,427.50 614.0,428.50 622.0,428.50 623.0,427.50 626.0,427.50 627.5,426.50 629.0,427.50 630.0,428.50 634.0,428.50 635.0,427.50 643.0,427.50 644.0,428.50 647.0,428.50 648.0,427.50 658.0,427.50 659.0,428.50 665.0,428.50 666.0,427.50 674.0,427.50 675.0,428.50 678.0,428.50 679.0,427.50 692.0,427.50 693.0,428.50 699.0,428.50 700.0,427.50 703.0,427.50 704.0,428.50 710.0,428.50 711.0,427.50 715.0,427.50 716.0,428.50 721.0,428.50 722.0,427.50 730.0,427.50 731.0,428.50 733.0,428.50 734.0,427.50 740.0,427.50 741.0,428.50 744.0,428.50 745.0,427.50 751.0,427.50 752.0,428.50 756.0,428.50 757.0,427.50 762.0,427.50 763.0,428.50 771.0,428.50 772.0,427.50 777.0,427.50 778.0,428.50 788.0,428.50 789.0,427.50 794.0,427.50 795.0,428.50 808.0,428.50 809.0,427.50 811.0,427.50 812.0,428.50 818.0,428.50 819.0,427.50 824.0,427.50 825.0,428.50 833.0,428.50 834.0,427.50 842.0,427.50 843.0,428.50 851.0,428.50 852.0,427.50 855.0,427.50 856.0,428.50 861.0,428.50 862.0,427.50 875.0,427.50 876.0,428.50 878.0,428.50 879.0,427.50 887.0,427.50 888.0,428.50 891.0,428.50 892.0,427.50 895.0,427.50 896.0,428.50 901.0,428.50 902.0,427.50 906.0,427.50 907.0,428.50 915.0,428.50 916.0,427.50 926.0,427.50 927.0,428.50 930.0,428.50 931.0,427.50 935.0,427.50 936.0,428.50 938.0,428.50 939.0,427.50 952.0,427.50 953.0,428.50 957.0,428.50 958.0,427.50 971.0,427.50 972.0,428.50 980.0,428.50 981.0,427.50 985.0,427.50 986.5,426.50 988.0,427.50 989.0,428.50 992.0,428.50 993.0,427.50 997.0,427.50 998.0,428.50 1003.0,428.50 1004.0,427.50 1009.0,427.50 1010.5,426.50 1012.0,427.50 1013.0,428.50 1018.0,428.50 1019.0,427.50 1024.0,427.50 1025.0,428.50 1033.0,428.50 1034.0,427.50 1044.0,427.50 1045.0,428.50 1047.0,428.50 1048.0,427.50 1056.0,427.50 1057.0,428.50 1067.0,428.50 1068.0,427.50 1072.0,427.50 1073.0,428.50 1075.0,428.50 1076.0,427.50 1080.0,427.50 1081.0,428.50 1085.0,428.50 1086.0,427.50 1099.0,427.50 1100.0,428.50 1103.0,428.50 1104.0,427.50 1112.0,427.50 1113.0,428.50 1126.0,428.50 1127.0,427.50 1130.0,427.50 1131.0,428.50 1133.0,428.50 1134.0,427.50 1140.0,427.50 1141.5,426.50 1143.0,427.50 1144.0,428.50 1147.0,428.50 1148.0,427.50 1150.0,427.50 1151.0,428.50 1154.0,428.50 1155.0,427.50 1160.0,427.50 1161.0,428.50 1174.0,428.50 1175.0,427.50 1188.0,427.50 1189.0,428.50 1194.0,428.50 1195.0,427.50 1201.0,427.50 1202.0,428.50 1207.0,428.50 1208.0,427.50 1212.0,427.50 1213.0,428.50 1223.0,428.50 1224.0,427.50 1227.0,427.50 1228.0,428.50 1238.0,428.50 1239.0,427.50 1245.0,427.50 1246.0,428.50 1250.0,428.50 1251.0,427.50 1259.0,427.50 1260.0,428.50 1264.0,428.50 1265.0,427.50 1270.0,427.50 1271.0,428.50 1274.0,428.50 1275.0,427.50 1288.0,427.50 1289.0,428.50 1294.0,428.50 1295.0,427.50 1305.0,427.50 1306.0,428.50 1316.0,428.50 1317.0,427.50 1322.0,427.50 1323.0,428.50 1326.0,428.50 1327.0,427.50 1329.0,427.50 1330.0,428.50 1343.0,428.50 1344.0,427.50 1346.0,427.50 1347.0,428.50 1345.0,428.50" stroke="#00e000" stroke-width="1.2"/>
<polyline points="31.0,523.50 33.5,523.50 54.9,523.50 95.8,523.50 143.2,523.50 184.1,523.50 205.5,523.50 208.0,523.50 210.5,522.35 212.9,520.21 213.7,518.12 214.2,516.04 214.6,512.72 214.9,510.81 215.4,508.51 217.0,506.86 218.8,506.33 221.1,507.16 223.6,508.48 225.7,508.75 228.1,510.12 230.5,511.21 232.6,512.23 234.2,512.92 236.3,514.47 237.9,515.13 239.9,516.53 241.9,517.81 243.5,518.84 245.6,520.08 247.7,521.37 249.2,522.66 251.1,523.43 253.2,525.22 255.1,525.99 256.6,526.74 258.7,528.11 260.3,529.27 262.3,530.89 264.5,532.12 266.7,533.58 268.6,534.64 270.5,535.62 272.3,537.15 274.3,537.34 276.3,538.06 278.5,538.08 280.7,537.61 282.5,537.55 284.0,536.13 285.2,533.95 286.6,531.43 288.7,529.57 291.0,528.49 293.1,527.29 295.6,527.22 297.7,526.99 300.6,527.16 303.6,527.32 306.5,527.04 308.6,527.41 311.1,527.55 313.0,527.86 315.3,529.34 317.7,530.80 320.0,531.50 322.5,531.23 325.0,530.89 327.5,530.76 329.5,530.62 331.6,530.24 333.6,529.76 335.5,529.11 337.3,528.67 339.8,527.49 342.1,525.58 343.8,524.10 345.0,521.90 345.8,520.30 346.9,518.73 348.1,516.40 349.2,513.93 350.0,512.95 351.2,510.74 353.2,510.06 356.0,509.28 358.6,509.29 361.2,507.91 363.5,506.55 365.9,507.89 368.1,507.21 370.8,505.52 373.1,505.26 375.6,505.59 378.2,505.67 380.2,506.28 382.4,506.64 384.5,507.67 386.5,508.63 388.0,509.15 390.2,510.53 392.4,511.62 395.1,513.40 397.3,514.05 399.5,514.97 400.9,516.57 402.6,517.49 404.4,518.99 406.3,520.54 408.2,521.51 410.4,522.48 412.6,523.33 414.7,523.55 416.4,524.49 418.4,525.48 419.9,527.08 421.9,528.03 424.0,529.88 426.0,531.17 427.5,532.19 429.5,533.89 431.9,534.34 433.5,535.54 435.7,536.24 438.0,536.57 440.2,537.85 441.8,538.37 444.2,539.07 446.3,539.45 449.0,539.58 451.8,539.38 454.0,538.85 455.8,538.10 457.3,536.25 458.3,534.99 459.1,532.69 460.1,530.40 461.4,528.85 463.6,528.30 466.2,528.12 468.7,528.69 470.9,529.24 473.0,530.10 475.3,531.02 477.4,530.72 479.7,531.29 482.1,531.34 484.5,531.15 486.7,531.12 488.9,530.64 491.0,529.92 493.0,529.38 494.9,529.00 496.8,527.87 498.6,525.70 500.2,523.97 501.5,522.29 503.3,520.50 504.7,519.47 506.4,517.52 508.1,515.79 509.5,514.54 511.3,512.50 512.7,512.37 514.7,511.60 516.8,510.30 519.1,509.89 521.1,509.37 523.3,508.41 525.5,507.87 527.6,507.24 529.3,506.41 531.8,506.78 533.6,506.41 535.8,506.70 538.1,506.57 539.9,506.84 542.4,506.30 544.2,507.12 546.5,507.07 548.8,507.38 550.6,508.29 552.8,509.20 555.2,510.79 558.5,512.46 562.3,514.73 565.6,516.61 568.0,517.88 570.2,518.74 571.8,519.86 574.0,520.99 576.3,522.55 578.4,523.09 580.0,524.10 582.0,525.75 583.8,527.15 586.1,528.54 588.7,530.49 591.0,532.38 592.8,533.79 594.8,534.93 597.1,535.93 599.7,536.71 602.1,537.22 604.6,537.25 606.7,537.59 608.8,538.52 611.1,539.35 613.7,539.78 616.4,539.62 619.0,539.59 620.6,538.69 622.2,536.72 623.8,535.14 625.2,534.01 626.4,532.33 627.9,530.34 629.3,529.27 630.7,529.94 632.1,530.65 634.6,530.53 636.8,530.71 639.9,530.80 643.1,531.06 646.2,530.73 648.4,530.56 650.9,531.11 652.8,530.27 655.1,528.98 657.4,527.97 659.1,526.64 660.7,524.72 661.8,523.26 663.2,521.76 664.8,519.99 666.2,518.36 667.3,517.12 668.9,515.61 671.2,514.07 673.1,513.11 675.5,512.57 677.8,511.17 679.7,510.21 682.0,509.42 684.0,509.41 686.6,508.61 689.3,508.94 691.8,508.38 694.1,507.57 696.3,506.13 698.4,505.29 701.2,505.61 704.1,505.99 706.7,506.29 709.3,507.73 711.5,508.16 713.8,509.10 715.7,510.26 718.0,511.35 720.4,512.18 722.3,512.74 724.6,514.28 726.7,515.39 728.2,516.69 730.1,517.71 732.2,518.82 734.1,519.98 735.6,521.54 737.7,522.54 739.9,523.81 741.8,524.43 744.2,526.16 746.7,527.11 748.6,528.36 750.8,529.24 752.2,530.12 753.8,531.85 755.5,533.38 757.3,534.73 759.2,536.15 761.3,537.02 763.4,537.60 765.5,538.02 767.6,538.33 769.7,538.30 771.8,537.77 773.7,538.30 775.7,538.80 777.5,540.30 779.4,541.22 781.5,540.95 783.7,540.28 785.9,539.18 787.4,538.29 788.7,536.44 790.1,534.78 791.6,533.00 793.3,531.87 795.4,531.70 797.7,531.58 800.1,531.88 802.5,532.41 804.8,531.89 806.9,531.31 808.9,531.28 810.9,530.21 812.8,529.73 814.6,528.70 817.0,528.02 819.3,527.67 821.1,526.70 822.8,524.94 824.0,523.57 825.5,522.23 827.1,520.43 828.6,519.03 829.8,517.85 831.5,515.51 833.7,514.87 835.3,513.64 837.2,512.75 839.1,511.53 840.7,510.58 842.9,509.72 844.6,509.24 846.9,508.01 849.4,507.59 852.0,507.25 854.4,506.81 856.9,506.46 859.5,505.72 861.9,505.20 864.2,505.90 866.5,506.58 868.6,507.33 870.7,508.18 873.0,508.66 875.4,509.25 877.3,509.31 879.5,510.47 881.2,512.00 883.4,512.65 885.9,514.51 888.1,515.67 889.8,516.72 892.0,517.98 894.1,518.68 896.5,520.72 898.6,521.45 900.8,522.77 902.2,523.91 904.1,524.60 906.2,526.22 908.1,527.46 909.5,528.06 911.7,529.22 913.9,530.36 915.8,531.66 918.4,532.63 921.3,534.35 923.9,536.24 925.8,536.78 928.0,538.03 930.0,538.90 932.5,538.73 934.6,539.33 937.1,539.65 938.9,539.15 941.2,539.17 943.4,539.54 945.2,539.12 947.7,539.32 949.8,538.00 951.4,536.63 953.4,535.64 955.4,534.55 957.0,533.12 959.1,531.89 960.9,532.17 963.5,532.07 966.2,531.84 968.7,532.05 970.6,532.05 972.9,530.94 975.0,530.00 977.6,528.93 979.7,527.92 982.0,526.60 983.8,524.94 985.2,523.41 986.9,522.05 988.6,520.88 990.0,519.09 991.8,517.70 994.0,516.37 996.0,515.80 998.6,514.10 1001.4,512.87 1004.0,511.42 1006.0,510.89 1008.2,509.23 1009.9,509.23 1012.0,508.97 1014.3,508.89 1016.4,508.19 1018.7,507.60 1020.8,505.97 1022.9,505.67 1025.4,505.78 1027.9,505.59 1030.3,506.73 1032.8,508.27 1035.6,508.18 1038.2,508.35 1040.5,508.98 1042.4,509.99 1045.0,511.29 1047.7,512.22 1050.3,513.20 1052.2,514.01 1054.5,515.07 1056.4,516.65 1058.2,518.39 1060.6,520.22 1063.2,522.27 1065.6,524.09 1067.4,525.79 1069.3,527.44 1071.4,528.87 1073.0,529.50 1075.0,530.53 1077.0,531.76 1078.6,532.77 1080.7,534.34 1083.1,535.45 1085.2,535.93 1087.7,536.90 1089.8,537.33 1092.2,538.39 1094.2,538.42 1096.7,539.09 1099.4,538.85 1102.0,539.44 1104.6,539.18 1107.4,539.45 1109.9,539.28 1111.8,538.88 1113.9,537.88 1115.5,536.73 1117.5,535.64 1119.6,534.17 1121.2,533.47 1123.3,532.03 1125.8,531.77 1127.6,531.65 1129.8,531.66 1132.1,530.92 1133.9,530.83 1136.4,530.49 1138.3,530.15 1140.6,528.86 1142.9,527.62 1144.6,527.02 1146.5,524.80 1148.7,523.49 1151.9,520.89 1155.3,518.24 1158.5,515.24 1160.7,513.74 1162.6,512.07 1164.2,511.44 1166.3,510.66 1168.6,509.17 1170.7,508.95 1172.4,507.93 1174.9,507.92 1177.0,507.36 1179.8,507.09 1182.5,506.62 1184.6,506.32 1187.1,505.82 1188.9,505.48 1191.1,506.10 1193.3,506.24 1195.3,507.40 1197.8,507.91 1200.0,509.13 1202.3,509.75 1204.3,510.69 1206.8,512.18 1208.8,512.78 1211.1,514.00 1213.3,515.07 1215.4,516.17 1217.9,517.46 1220.0,518.46 1222.2,519.84 1224.4,521.21 1226.5,522.25 1229.0,523.67 1231.1,524.56 1233.3,525.95 1235.4,527.15 1236.9,528.20 1238.8,529.94 1240.8,530.99 1242.3,532.22 1244.4,534.04 1246.7,535.01 1248.7,535.31 1251.2,536.30 1253.2,537.40 1255.5,538.67 1257.6,538.71 1260.1,539.36 1262.2,539.79 1264.7,539.78 1266.5,539.80 1268.9,539.46 1271.2,539.45 1273.0,539.44 1275.5,539.43 1277.7,538.17 1279.2,537.41 1281.1,536.09 1283.2,534.90 1285.1,533.79 1286.6,533.35 1288.8,531.58 1290.6,530.97 1293.0,530.59 1295.6,530.08 1298.1,529.79 1299.9,529.40 1302.2,527.99 1304.2,527.32 1306.7,525.93 1308.7,524.98 1311.0,524.57 1312.2,522.90 1313.6,521.36 1315.0,519.55 1316.5,518.46 1318.3,516.94 1320.2,516.00 1322.1,515.47 1323.9,514.35 1325.7,512.51 1327.6,511.20 1329.4,510.75 1331.3,509.89 1333.3,509.64 1335.4,509.19 1338.2,508.35 1341.3,507.08 1343.9,506.86 1345.0,506.65" stroke="#0080ff" stroke-width="1.25"/>
<polyline points="31.0,622.50 33.5,622.50 53.7,622.50 92.0,622.50 136.3,622.50 174.6,622.50 194.8,622.50 197.3,622.50 197.3,621.50 198.8,621.33 201.6,621.60 204.4,621.82 206.2,621.50 206.8,619.06 207.2,617.27 207.7,614.92 208.3,612.38 208.8,610.03 209.2,608.24 209.8,605.80 211.3,604.91 212.9,603.66 213.6,601.78 214.0,599.96 214.2,597.38 214.6,595.95 215.0,592.85 215.3,590.96 215.7,588.68 216.2,586.56 217.0,585.29 219.0,584.44 220.8,584.88 221.9,587.37 223.2,589.71 225.1,593.77 227.3,598.71 229.2,602.80 230.5,605.56 231.6,608.17 232.6,610.36 233.9,613.00 235.7,617.91 237.9,623.06 239.7,627.39 241.0,630.39 242.0,633.34 243.4,635.13 244.3,636.31 245.5,637.78 246.8,640.34 248.0,642.26 248.9,643.24 250.3,644.97 251.6,647.80 252.5,649.51 253.8,651.58 255.2,653.75 256.5,655.98 257.4,658.13 258.7,659.84 259.9,661.76 260.9,663.41 262.2,665.62 263.5,668.48 264.8,670.52 265.8,672.57 267.0,674.17 268.4,675.31 270.2,676.56 272.2,677.88 274.6,677.60 277.1,677.29 279.5,676.58 281.0,675.19 282.4,673.01 283.7,671.32 284.8,669.40 285.7,668.00 286.8,665.65 287.6,664.12 288.7,662.04 290.0,659.46 291.1,657.05 291.9,654.79 293.0,653.00 294.4,650.20 296.6,647.57 300.0,641.86 303.7,636.37 307.1,631.22 309.3,627.32 310.7,625.79 312.1,623.72 314.2,620.91 317.3,616.24 320.7,611.50 323.8,606.85 325.9,603.86 327.3,601.43 329.1,599.91 330.8,598.23 333.3,595.32 335.9,593.46 338.4,590.32 340.1,588.74 341.9,586.78 342.6,585.12 343.1,583.34 343.7,580.66 344.3,579.01 344.9,576.85 345.4,575.06 346.1,572.65 347.0,570.00 347.5,568.48 348.3,566.50 349.1,564.67 349.9,562.58 350.4,560.88 351.3,558.23 353.6,557.64 356.5,557.90 358.5,558.17 360.6,558.83 362.7,559.31 364.7,560.13 366.7,562.23 368.6,563.04 370.0,564.15 371.6,566.26 372.7,567.89 374.1,569.70 375.6,571.48 376.7,572.56 378.3,574.21 379.5,576.65 380.6,578.64 382.2,581.75 383.8,584.43 385.4,587.28 386.5,588.71 387.7,590.97 388.3,594.11 388.9,595.95 389.6,599.18 390.2,601.00 390.8,604.03 391.8,606.43 393.1,609.02 395.0,613.21 397.0,617.02 398.9,621.12 400.2,624.43 401.2,626.77 402.1,628.59 402.8,630.56 403.8,633.87 404.9,636.19 405.9,639.28 406.6,641.23 407.5,643.47 408.8,645.62 410.1,647.15 411.8,650.42 413.6,653.18 415.3,655.58 416.6,657.62 417.9,660.00 419.1,662.47 419.9,663.61 420.9,665.41 422.1,668.19 423.1,669.74 423.9,671.37 425.1,673.60 426.8,674.83 429.0,676.64 431.4,678.03 433.2,679.34 435.0,680.68 436.9,681.23 438.7,681.65 440.8,681.19 442.8,680.44 444.9,678.89 447.1,678.73 449.5,677.54 451.7,677.69 453.2,677.02 454.3,674.33 455.2,672.61 456.4,670.52 457.5,668.46 458.4,666.11 459.5,664.13 460.2,662.03 461.0,659.40 462.0,655.52 463.2,651.65 464.2,648.10 465.0,645.38 465.7,643.15 467.0,640.78 468.1,639.08 469.6,636.95 471.2,634.57 472.7,631.49 473.8,629.86 475.1,627.53 476.4,626.01 477.5,624.31 478.8,622.34 480.0,620.28 481.1,618.52 482.4,616.42 483.8,613.87 485.3,611.65 487.4,608.73 489.8,605.01 491.9,601.74 493.4,599.18 494.8,597.49 495.7,595.28 497.3,590.84 499.7,584.85 502.4,578.61 504.8,572.37 506.4,568.64 507.3,566.33 508.4,564.75 509.9,562.94 511.7,561.11 513.6,559.98 515.7,559.31 518.1,557.82 520.5,557.16 522.9,557.87 525.0,558.39 527.1,559.26 529.2,560.27 531.0,561.72 532.3,563.35 533.6,565.11 534.9,567.58 536.6,570.44 538.4,572.58 540.1,575.99 541.4,578.03 542.7,579.89 544.0,582.03 545.0,583.85 546.3,586.07 547.7,588.34 548.7,589.84 550.0,591.85 551.1,594.16 552.4,596.82 554.2,600.84 556.2,605.07 558.0,609.62 559.3,611.59 560.4,614.30 561.3,616.68 562.9,620.47 565.3,627.15 568.0,634.49 570.4,641.09 572.0,645.29 572.9,647.42 574.1,649.81 575.0,651.54 576.3,653.58 577.8,656.74 579.1,659.51 580.0,661.09 581.2,663.08 582.4,665.30 583.4,666.83 584.7,669.10 586.0,671.92 587.3,673.38 588.3,675.57 589.5,677.31 591.1,679.72 593.4,680.86 595.8,682.53 597.8,682.58 599.9,683.50 602.0,683.48 604.1,683.20 606.3,681.72 608.5,680.18 610.6,679.45 612.4,678.86 614.2,679.44 615.5,680.08 616.6,677.89 617.5,675.61 618.6,673.97 619.7,671.57 620.8,668.64 621.7,667.34 622.8,664.80 623.7,663.12 625.0,659.56 626.9,653.74 629.1,647.88 631.0,643.32 632.3,639.17 633.2,637.00 634.4,635.00 635.7,632.53 637.4,629.76 639.4,626.33 641.1,623.20 642.4,620.79 643.6,618.33 644.8,616.11 646.9,612.50 650.2,606.43 653.7,600.20 657.0,595.44 659.1,591.13 660.3,589.55 661.3,587.17 662.6,583.85 664.5,579.71 666.5,574.93 668.4,570.26 669.7,567.17 670.7,564.95 671.7,563.79 673.0,561.37 674.5,560.34 675.9,559.18 677.9,559.56 680.0,560.77 682.3,559.45 684.8,557.19 686.4,557.62 688.2,558.69 690.0,560.86 691.9,562.26 693.6,562.93 695.9,564.71 698.2,565.29 699.8,566.45 700.9,568.88 701.9,570.74 703.2,573.38 704.7,576.00 706.0,578.56 707.0,580.49 708.1,582.58 709.2,585.64 710.1,587.38 711.2,589.48 712.4,591.12 713.3,593.49 714.4,595.62 715.4,597.78 717.4,602.07 720.5,609.90 723.9,617.89 727.0,624.82 729.0,629.46 730.0,631.69 731.0,634.07 732.0,636.97 733.4,639.52 734.9,643.81 736.3,647.28 737.3,649.54 738.3,651.69 739.6,653.70 740.9,655.53 742.6,658.68 744.4,661.70 746.1,663.76 747.4,666.19 748.7,667.94 749.8,670.52 750.6,671.85 751.8,674.59 752.9,677.17 754.1,679.53 754.9,681.02 756.0,683.01 758.0,683.20 760.8,682.69 763.3,682.21 765.5,683.49 767.5,683.40 769.0,682.90 770.5,681.26 772.0,680.20 773.7,678.99 775.8,678.19 778.2,677.11 780.4,676.74 782.0,675.51 783.3,673.43 784.5,671.13 785.8,669.45 787.0,667.63 788.3,664.86 789.1,662.42 790.4,659.06 792.4,652.70 794.6,645.53 796.6,639.77 797.9,635.33 798.7,632.54 799.9,630.73 801.5,628.21 802.8,626.99 804.0,624.74 805.8,621.09 808.6,615.49 811.6,609.77 814.4,604.21 816.2,600.64 817.4,598.54 818.7,596.51 819.6,594.62 820.9,593.33 822.2,590.83 823.5,589.08 824.4,586.80 825.7,585.08 826.7,582.89 828.0,579.99 829.9,575.39 831.9,571.37 833.8,567.22 835.1,564.71 836.1,562.06 837.8,561.64 840.2,561.29 842.4,561.07 845.0,559.62 847.6,558.18 849.4,559.04 851.2,560.93 853.0,563.10 854.8,564.38 857.7,564.21 860.0,563.99 861.3,566.59 862.3,568.45 863.6,570.56 865.0,572.94 866.0,574.97 867.3,576.90 868.5,578.98 869.8,581.01 871.5,584.08 873.5,588.19 875.2,590.73 876.5,593.62 877.7,595.85 878.7,597.40 879.7,600.24 881.1,603.19 882.7,606.83 884.1,610.18 885.1,612.72 886.1,615.02 887.0,617.34 888.3,620.71 890.2,626.70 892.4,631.98 894.3,637.79 895.6,640.92 896.5,642.86 897.7,645.82 899.4,648.56 901.9,652.99 904.6,658.79 907.1,662.80 908.8,665.67 910.0,668.08 911.2,670.51 912.8,672.18 914.2,674.27 916.0,676.50 917.3,677.54 919.0,678.96 920.8,680.65 922.5,682.35 923.8,683.37 925.6,685.04 927.9,684.43 930.8,682.93 933.4,682.73 936.1,682.50 938.1,682.11 939.5,680.02 940.9,678.36 942.8,675.54 944.8,673.03 946.7,670.54 948.1,668.01 949.5,666.11 950.5,664.09 952.1,659.94 954.4,655.04 957.1,648.56 959.4,642.62 961.0,639.72 962.0,637.12 963.1,634.98 965.0,630.97 968.1,624.46 971.5,616.64 974.6,609.83 976.5,606.36 977.6,604.17 978.6,601.17 980.5,597.23 983.3,590.91 986.5,584.33 989.3,578.26 991.2,573.51 992.2,571.36 994.0,570.04 995.3,568.39 996.9,566.53 998.5,565.15 999.8,563.43 1001.6,562.36 1003.1,560.77 1005.1,559.28 1007.3,558.40 1009.5,557.56 1011.7,558.37 1014.2,558.59 1016.6,560.17 1018.8,561.89 1020.3,562.81 1021.9,564.62 1023.5,566.54 1025.4,568.46 1027.0,570.48 1028.6,572.11 1029.8,574.32 1030.6,576.66 1031.7,578.37 1032.8,580.37 1033.6,581.87 1034.8,583.65 1035.9,586.09 1036.8,588.14 1037.9,591.16 1039.1,593.69 1040.0,595.68 1041.1,597.91 1042.1,599.78 1043.9,603.98 1046.8,611.67 1050.0,618.73 1052.9,626.39 1054.7,630.31 1055.7,633.03 1056.7,635.39 1058.3,638.99 1060.6,643.69 1063.2,650.04 1065.5,655.49 1067.1,658.98 1068.1,660.92 1069.4,663.59 1070.9,665.93 1073.1,669.51 1075.6,673.68 1077.8,677.07 1079.3,679.91 1080.6,681.56 1082.3,682.96 1084.8,683.87 1087.5,684.78 1090.0,684.66 1092.1,683.99 1094.1,683.32 1096.2,682.12 1098.3,680.57 1100.5,679.86 1102.9,678.52 1105.3,677.59 1107.3,676.65 1108.7,675.13 1109.6,673.54 1111.5,668.27 1114.4,661.17 1117.6,653.14 1120.5,645.65 1122.4,641.48 1123.3,638.94 1124.4,637.25 1127.3,630.96 1132.1,621.06 1137.4,610.27 1142.2,600.61 1145.1,594.28 1146.2,591.91 1147.3,589.88 1149.3,586.23 1152.3,580.15 1155.7,573.64 1158.7,566.98 1160.7,563.29 1161.8,561.36 1163.6,560.25 1165.9,560.01 1168.2,559.11 1170.7,558.02 1173.2,557.77 1175.1,559.16 1177.1,560.39 1178.9,563.12 1180.5,563.84 1182.1,563.30 1183.6,562.42 1185.2,563.62 1187.0,565.32 1188.7,567.39 1189.9,569.81 1191.1,571.82 1192.7,574.01 1194.9,577.91 1197.4,582.47 1199.6,586.74 1201.2,589.11 1202.4,591.35 1203.3,593.63 1205.6,600.32 1209.5,610.54 1214.0,621.91 1217.9,632.25 1220.2,638.95 1221.1,641.41 1222.4,643.05 1224.2,646.32 1226.9,651.30 1229.9,656.27 1232.6,660.74 1234.4,664.01 1235.7,666.13 1236.9,668.84 1238.0,670.58 1239.5,672.90 1241.2,676.08 1242.7,679.11 1243.8,680.58 1245.0,682.79 1246.6,684.17 1249.0,685.07 1251.8,685.36 1254.4,684.85 1256.5,684.89 1258.0,683.91 1259.2,681.58 1260.6,680.04 1262.3,679.34 1264.5,678.36 1266.7,677.68 1268.7,677.52 1270.0,676.46 1271.1,674.59 1273.0,670.37 1275.9,664.49 1279.1,656.99 1282.0,650.84 1283.9,646.74 1285.0,644.30 1285.9,642.20 1287.3,638.87 1289.4,633.95 1291.7,628.20 1293.8,623.73 1295.2,620.25 1296.1,617.46 1297.2,615.08 1298.9,611.68 1301.6,605.80 1304.5,599.68 1307.2,594.60 1308.9,590.42 1310.0,588.93 1311.2,586.29 1312.8,584.80 1314.3,581.95 1315.5,580.25 1316.5,577.83 1317.3,576.23 1318.3,573.86 1319.3,571.39 1320.1,569.57 1321.1,567.99 1322.1,566.15 1323.3,564.59 1324.9,562.13 1326.6,561.00 1328.6,559.82 1331.1,558.51 1333.7,557.38 1336.0,557.35 1337.7,557.47 1338.8,559.23 1339.8,560.42 1342.9,561.78 1345.0,562.92" stroke="#e4b454" stroke-width="1.25"/>
<path d="M60,722 L61,719.5 L70,719.5 L71,722" stroke="#7a10e0" stroke-width="1.4"/>
<path d="M106,722 L107,719.5 L108,719.5 L109,722" stroke="#7a10e0" stroke-width="1.4"/>
<path d="M120,722 L121,719.5 L123,719.5 L124,722" stroke="#7a10e0" stroke-width="1.4"/>
<path d="M202,722 L203,719.5 L212,719.5 L213,722" stroke="#7a10e0" stroke-width="1.4"/>
<path d="M216,722 L217,719.5 L218,719.5 L219,722" stroke="#7a10e0" stroke-width="1.4"/>
<path d="M227,722 L228,719.5 L239,719.5 L240,722" stroke="#7a10e0" stroke-width="1.4"/>
<path d="M261,722 L262,719.5 L271,719.5 L272,722" stroke="#7a10e0" stroke-width="1.4"/>
<path d="M295,722 L296,719.5 L303,719.5 L304,722" stroke="#7a10e0" stroke-width="1.4"/>
<path d="M309,722 L310,719.5 L321,719.5 L322,722" stroke="#7a10e0" stroke-width="1.4"/>
<path d="M343,722 L344,719.5 L351,719.5 L352,722" stroke="#7a10e0" stroke-width="1.4"/>
<path d="M360,722 L361,719.5 L368,719.5 L369,722" stroke="#7a10e0" stroke-width="1.4"/>
<path d="M441,722 L442,719.5 L453,719.5 L454,722" stroke="#7a10e0" stroke-width="1.4"/>
<path d="M474,722 L475,719.5 L476,719.5 L477,722" stroke="#7a10e0" stroke-width="1.4"/>
<path d="M480,722 L481,719.5 L492,719.5 L493,722" stroke="#7a10e0" stroke-width="1.4"/>
<path d="M504,722 L505,719.5 L506,719.5 L507,722" stroke="#7a10e0" stroke-width="1.4"/>
<path d="M524,722 L525,719.5 L532,719.5 L533,722" stroke="#7a10e0" stroke-width="1.4"/>
<path d="M536,722 L537,719.5 L546,719.5 L547,722" stroke="#7a10e0" stroke-width="1.4"/>
<path d="M550,722 L551,719.5 L560,719.5 L561,722" stroke="#7a10e0" stroke-width="1.4"/>
<path d="M569,722 L570,719.5 L574,719.5 L575,722" stroke="#7a10e0" stroke-width="1.4"/>
<path d="M590,722 L591,719.5 L592,719.5 L593,722" stroke="#7a10e0" stroke-width="1.4"/>
<path d="M606,722 L607,719.5 L611,719.5 L612,722" stroke="#7a10e0" stroke-width="1.4"/>
<path d="M627,722 L628,719.5 L630,719.5 L631,722" stroke="#7a10e0" stroke-width="1.4"/>
<path d="M642,722 L643,719.5 L652,719.5 L653,722" stroke="#7a10e0" stroke-width="1.4"/>
<path d="M700,722 L701,719.5 L712,719.5 L713,722" stroke="#7a10e0" stroke-width="1.4"/>
<path d="M743,722 L744,719.5 L748,719.5 L749,722" stroke="#7a10e0" stroke-width="1.4"/>
<path d="M767,722 L768,719.5 L775,719.5 L776,722" stroke="#7a10e0" stroke-width="1.4"/>
<path d="M781,722 L782,719.5 L793,719.5 L794,722" stroke="#7a10e0" stroke-width="1.4"/>
<path d="M802,722 L803,719.5 L814,719.5 L815,722" stroke="#7a10e0" stroke-width="1.4"/>
<path d="M839,722 L840,719.5 L851,719.5 L852,722" stroke="#7a10e0" stroke-width="1.4"/>
<path d="M875,722 L876,719.5 L880,719.5 L881,722" stroke="#7a10e0" stroke-width="1.4"/>
<path d="M886,722 L887,719.5 L891,719.5 L892,722" stroke="#7a10e0" stroke-width="1.4"/>
<path d="M910,722 L911,719.5 L918,719.5 L919,722" stroke="#7a10e0" stroke-width="1.4"/>
<path d="M953,722 L954,719.5 L965,719.5 L966,722" stroke="#7a10e0" stroke-width="1.4"/>
<path d="M974,722 L975,719.5 L977,719.5 L978,722" stroke="#7a10e0" stroke-width="1.4"/>
<path d="M995,722 L996,719.5 L1000,719.5 L1001,722" stroke="#7a10e0" stroke-width="1.4"/>
<path d="M1015,722 L1016,719.5 L1018,719.5 L1019,722" stroke="#7a10e0" stroke-width="1.4"/>
<path d="M1022,722 L1023,719.5 L1034,719.5 L1035,722" stroke="#7a10e0" stroke-width="1.4"/>
<path d="M1050,722 L1051,719.5 L1052,719.5 L1053,722" stroke="#7a10e0" stroke-width="1.4"/>
<path d="M1056,722 L1057,719.5 L1059,719.5 L1060,722" stroke="#7a10e0" stroke-width="1.4"/>
<path d="M1083,722 L1084,719.5 L1088,719.5 L1089,722" stroke="#7a10e0" stroke-width="1.4"/>
<path d="M1112,722 L1113,719.5 L1122,719.5 L1123,722" stroke="#7a10e0" stroke-width="1.4"/>
<path d="M1131,722 L1132,719.5 L1139,719.5 L1140,722" stroke="#7a10e0" stroke-width="1.4"/>
<path d="M1148,722 L1149,719.5 L1153,719.5 L1154,722" stroke="#7a10e0" stroke-width="1.4"/>
<path d="M1165,722 L1166,719.5 L1173,719.5 L1174,722" stroke="#7a10e0" stroke-width="1.4"/>
<path d="M1182,722 L1183,719.5 L1190,719.5 L1191,722" stroke="#7a10e0" stroke-width="1.4"/>
<path d="M1200,722 L1201,719.5 L1208,719.5 L1209,722" stroke="#7a10e0" stroke-width="1.4"/>
<path d="M1220,722 L1221,719.5 L1232,719.5 L1233,722" stroke="#7a10e0" stroke-width="1.4"/>
<path d="M1238,722 L1239,719.5 L1246,719.5 L1247,722" stroke="#7a10e0" stroke-width="1.4"/>
<path d="M1255,722 L1256,719.5 L1258,719.5 L1259,722" stroke="#7a10e0" stroke-width="1.4"/>
<path d="M1272,722 L1273,719.5 L1275,719.5 L1276,722" stroke="#7a10e0" stroke-width="1.4"/>
<path d="M1279,722 L1280,719.5 L1291,719.5 L1292,722" stroke="#7a10e0" stroke-width="1.4"/>
<path d="M1307,722 L1308,719.5 L1309,719.5 L1310,722" stroke="#7a10e0" stroke-width="1.4"/>
<path d="M1327,722 L1328,719.5 L1330,719.5 L1331,722" stroke="#7a10e0" stroke-width="1.4"/>
<path d="M1334,722 L1335,719.5 L1342,719.5 L1343,722" stroke="#7a10e0" stroke-width="1.4"/></g>
<!-- window border -->
<rect x="0" y="0" width="1" height="721" fill="#0c2468"/>
<rect x="1" y="0" width="1" height="721" fill="#2a7fe0"/>
<rect x="2" y="19" width="2" height="721" fill="#9c9c9c"/>
</svg>
</body></html>
